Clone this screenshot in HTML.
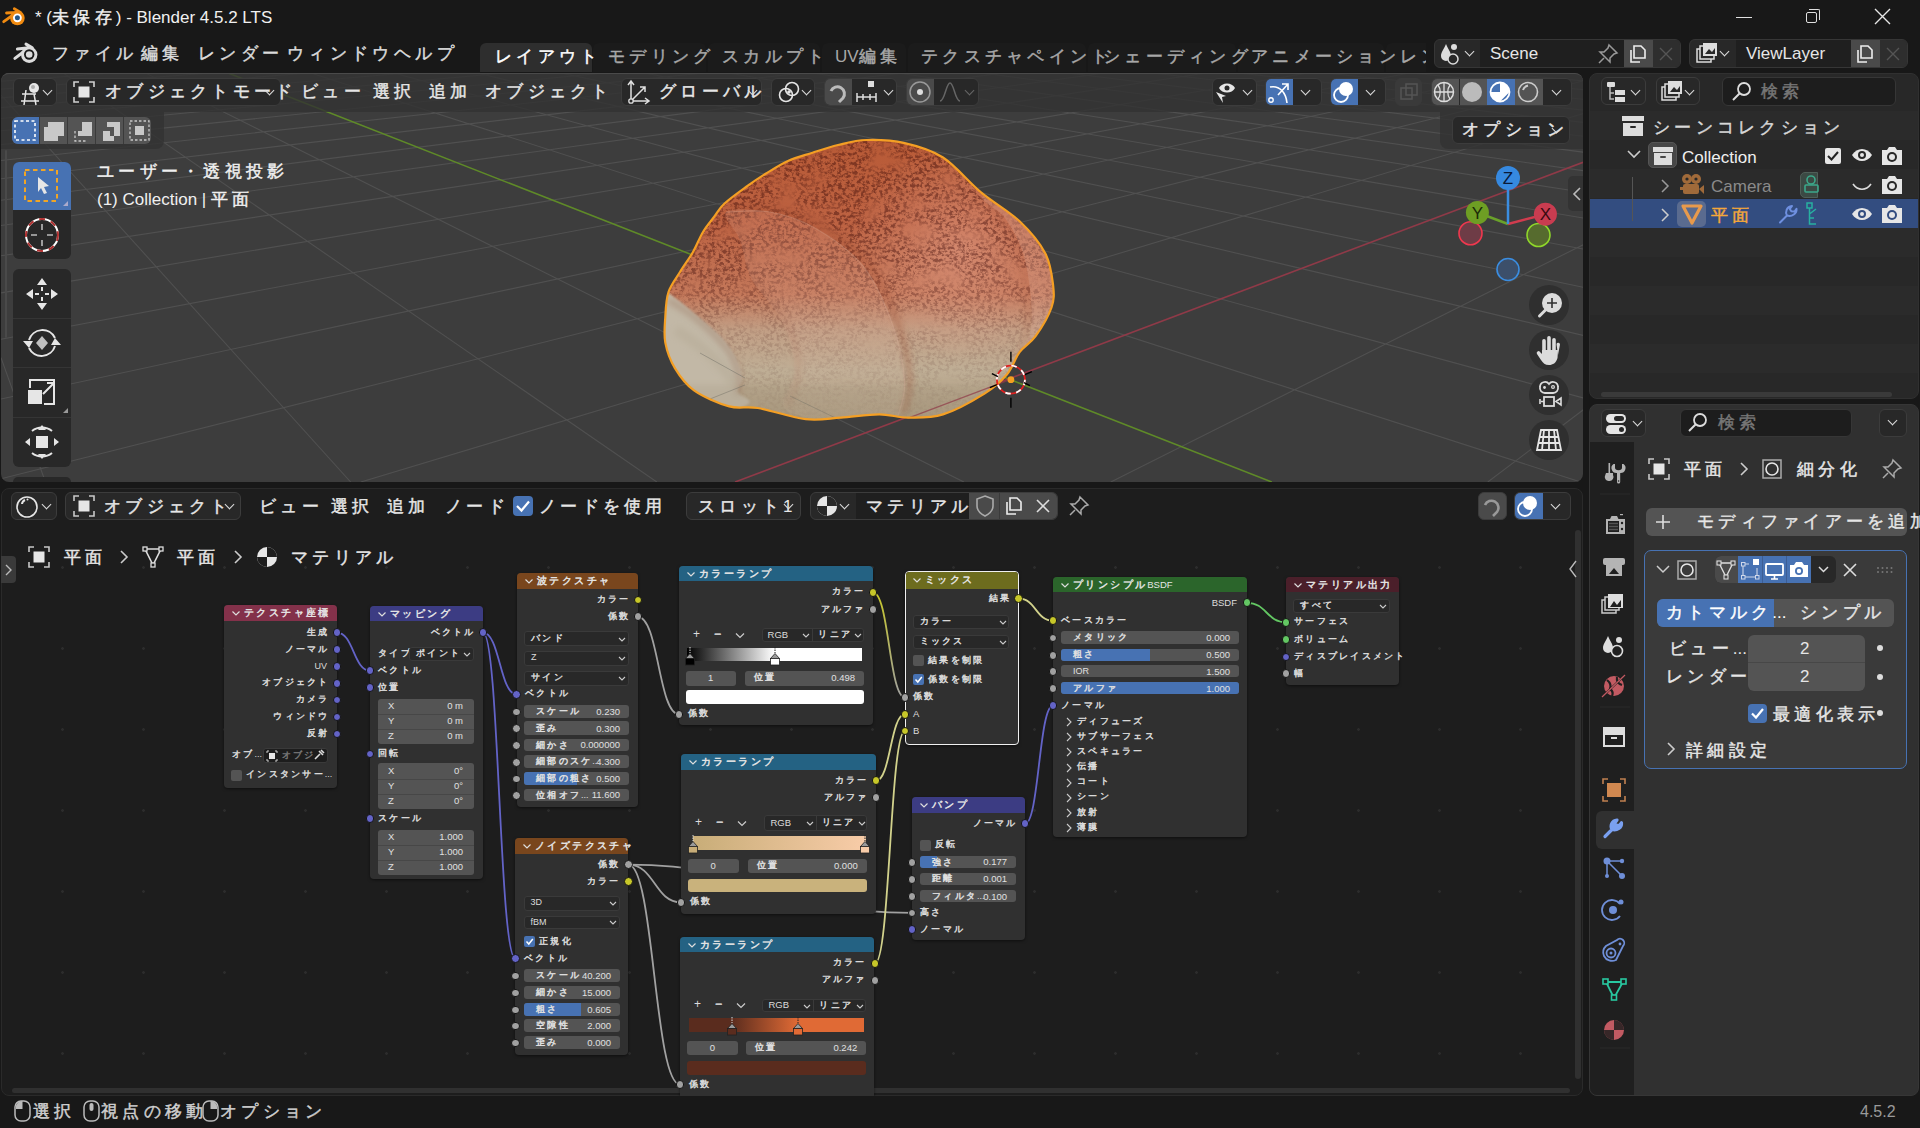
<!DOCTYPE html>
<html><head><meta charset="utf-8">
<style>
*{box-sizing:border-box;margin:0;padding:0}
html,body{width:1920px;height:1128px;overflow:hidden;background:#181818;font-family:"Liberation Sans",sans-serif;color:#e6e6e6}
.a{position:absolute}
.j{letter-spacing:.25em;-webkit-text-stroke:.45px currentColor}
.t{position:absolute;white-space:nowrap;line-height:1}
svg{position:absolute;left:0;top:0;overflow:visible}
</style></head><body>
<!-- TITLE BAR -->
<div class="a" style="left:0;top:0;width:1920px;height:35px;background:#181818"></div>
<svg width="30" height="30" style="left:0;top:0" viewBox="0 0 30 30">
 <path d="M3.7 21.7L13 15M6.5 13L16 12.4M14.3 8.7L20.5 12.4" stroke="#f08a10" stroke-width="2.8" stroke-linecap="round"/>
 <circle cx="17.4" cy="18" r="7.3" fill="#f08a10"/><circle cx="17.4" cy="17.8" r="4.4" fill="#fff"/><circle cx="17.4" cy="17.8" r="2.5" fill="#265787"/>
</svg>
<div class="t" style="left:35px;top:9px;font-size:17px;color:#f0f0f0">* (<span class="j">未保存</span>) - Blender 4.5.2 LTS</div>
<!-- window controls -->
<div class="a" style="left:1736px;top:17px;width:16px;height:1px;background:#e0e0e0"></div>
<div class="a" style="left:1806px;top:12px;width:11px;height:11px;border:1.3px solid #e0e0e0;border-radius:2px"></div>
<div class="a" style="left:1809px;top:9px;width:11px;height:11px;border-top:1.3px solid #e0e0e0;border-right:1.3px solid #e0e0e0;border-radius:0 2px 0 0"></div>
<svg width="20" height="20" style="left:1873px;top:7px"><path d="M2 2L17 17M17 2L2 17" stroke="#e6e6e6" stroke-width="1.4"/></svg>

<!-- TOP BAR -->
<svg width="40" height="30" style="left:0;top:35px" viewBox="0 35 40 30">
 <path d="M14.9 58.4L23 52.2M17.4 49.1L26.7 48.1M26 44.1L32.3 47.8" stroke="#dcdcdc" stroke-width="3" stroke-linecap="round"/>
 <circle cx="29.2" cy="54.7" r="8.2" fill="#dcdcdc"/><circle cx="29.2" cy="54.5" r="5.2" fill="#181818"/><circle cx="29.2" cy="54.5" r="3.3" fill="#dcdcdc"/>
</svg>
<div class="t j" style="left:52px;top:45px;font-size:17px;color:#dcdcdc">ファイル</div>
<div class="t j" style="left:141px;top:45px;font-size:17px;color:#dcdcdc">編集</div>
<div class="t j" style="left:198px;top:45px;font-size:17px;color:#dcdcdc">レンダー</div>
<div class="t j" style="left:287px;top:45px;font-size:17px;color:#dcdcdc">ウィンドウ</div>
<div class="t j" style="left:394px;top:45px;font-size:17px;color:#dcdcdc">ヘルプ</div>

<div class="a" style="left:480px;top:43px;width:112px;height:29px;background:#2e2e2e;border-radius:6px 6px 0 0"></div>
<div class="a" style="left:593px;top:43px;width:113px;height:29px;background:#1b1b1b;border-radius:6px 6px 0 0"></div>
<div class="a" style="left:708px;top:43px;width:112px;height:29px;background:#1b1b1b;border-radius:6px 6px 0 0"></div>
<div class="a" style="left:822px;top:43px;width:84px;height:29px;background:#1b1b1b;border-radius:6px 6px 0 0"></div>
<div class="a" style="left:908px;top:43px;width:178px;height:29px;background:#1b1b1b;border-radius:6px 6px 0 0"></div>
<div class="a" style="left:1088px;top:43px;width:148px;height:29px;background:#1b1b1b;border-radius:6px 6px 0 0"></div>
<div class="a" style="left:1238px;top:43px;width:146px;height:29px;background:#1b1b1b;border-radius:6px 6px 0 0"></div>
<div class="a" style="left:1386px;top:43px;width:40px;height:29px;background:#1b1b1b;border-radius:6px 0 0 0"></div>
<div class="t j" style="left:495px;top:48px;font-size:17px;color:#fff">レイアウト</div>
<div class="t j" style="left:608px;top:48px;font-size:17px;color:#a8a8a8">モデリング</div>
<div class="t j" style="left:722px;top:48px;font-size:17px;color:#a8a8a8">スカルプト</div>
<div class="t" style="left:835px;top:48px;font-size:17px;color:#a8a8a8">UV<span class="j">編集</span></div>
<div class="t j" style="left:921px;top:48px;font-size:17px;color:#a8a8a8">テクスチャペイント</div>
<div class="t j" style="left:1103px;top:48px;font-size:17px;color:#a8a8a8">シェーディング</div>
<div class="t j" style="left:1251px;top:48px;font-size:17px;color:#a8a8a8">アニメーション</div>
<div class="a" style="left:1400px;top:43px;width:26px;height:29px;overflow:hidden"><div class="t j" style="left:0;top:5px;font-size:17px;color:#a8a8a8">レンダリング</div></div>
<!-- scene selector -->
<div class="a" style="left:1434px;top:39px;width:247px;height:29px;background:#282828;border:1px solid #363636;border-radius:6px;overflow:hidden">
 <div class="a" style="left:45px;top:0;width:144px;height:29px;background:#1f1f1f"></div>
 <div class="a" style="left:189px;top:0;width:29px;height:29px;background:#4a4a4a"></div>
 <div class="a" style="left:218px;top:0;width:29px;height:29px;background:#2e2e2e"></div>
</div>
<svg width="30" height="26" style="left:1438px;top:41px" viewBox="0 0 30 26"><path d="M8 3C6 8 3 11 3 15A5 5 0 0 0 13 15C13 11 10 8 8 3Z" fill="#ddd"/><circle cx="16" cy="6" r="3" fill="#ddd"/><circle cx="15" cy="18" r="5" fill="#282828" stroke="#ddd" stroke-width="1.5"/></svg>
<div class="chev" style="left:1466px;top:48px"></div>
<div class="t" style="left:1490px;top:45px;font-size:17px;color:#e6e6e6">Scene</div>
<svg width="24" height="24" style="left:1596px;top:42px" viewBox="0 0 24 24"><path d="M13 3L21 11L18 12L14 16L14 20L4 10L8 10L12 6Z M8 16L3 21" stroke="#999" stroke-width="1.5" fill="none"/></svg>
<svg width="24" height="24" style="left:1626px;top:42px" viewBox="0 0 24 24"><path d="M8 4H15L19 8V16H8Z" fill="none" stroke="#eee" stroke-width="1.6"/><path d="M5 8V20H14" stroke="#eee" stroke-width="1.6" fill="none"/></svg>
<svg width="20" height="20" style="left:1656px;top:44px"><path d="M4 4L16 16M16 4L4 16" stroke="#555" stroke-width="1.4"/></svg>
<!-- view layer -->
<div class="a" style="left:1689px;top:39px;width:219px;height:29px;background:#282828;border:1px solid #363636;border-radius:6px;overflow:hidden">
 <div class="a" style="left:46px;top:0;width:115px;height:29px;background:#1f1f1f"></div>
 <div class="a" style="left:161px;top:0;width:29px;height:29px;background:#4a4a4a"></div>
 <div class="a" style="left:190px;top:0;width:29px;height:29px;background:#2e2e2e"></div>
</div>
<svg width="26" height="26" style="left:1694px;top:41px" viewBox="0 0 26 26"><rect x="3" y="8" width="14" height="13" fill="none" stroke="#ddd" stroke-width="1.5"/><rect x="6" y="5" width="14" height="13" fill="#282828" stroke="#ddd" stroke-width="1.5"/><rect x="9" y="2" width="14" height="13" fill="#ddd"/><path d="M11 13L15 8L18 11L21 7V13Z" fill="#282828"/></svg>
<div class="chev" style="left:1721px;top:48px"></div>
<div class="t" style="left:1746px;top:45px;font-size:17px;color:#e6e6e6">ViewLayer</div>
<svg width="24" height="24" style="left:1853px;top:42px" viewBox="0 0 24 24"><path d="M8 4H15L19 8V16H8Z" fill="none" stroke="#eee" stroke-width="1.6"/><path d="M5 8V20H14" stroke="#eee" stroke-width="1.6" fill="none"/></svg>
<svg width="20" height="20" style="left:1883px;top:44px"><path d="M4 4L16 16M16 4L4 16" stroke="#555" stroke-width="1.4"/></svg>
<!-- 3D VIEWPORT -->
<div class="a" id="vp" style="left:1px;top:73px;width:1582px;height:409px;background:#3d3d3d;border-radius:8px;overflow:hidden">
<svg width="1582" height="409" viewBox="0 0 1582 409" style="left:0;top:0">

 <path d="M44.4 409.0L0.0 284.6 M349.7 409.0L0.0 22.0 M655.8 409.0L62.2 0.0 M1486.8 409.0L1583.0 336.3 M962.9 409.0L144.5 0.0 M1109.8 409.0L1583.0 171.3 M1579.7 409.0L309.8 0.0 M359.9 409.0L1583.0 40.3 M1583.0 325.2L392.8 0.0 M0.0 405.7L1583.0 7.7 M1583.0 262.6L476.0 0.0 M0.0 326.0L1510.9 0.0 M1583.0 214.4L559.6 0.0 M0.0 266.3L1408.5 0.0 M1583.0 176.2L643.3 0.0 M0.0 219.9L1306.6 0.0 M1583.0 145.2L727.4 0.0 M0.0 182.8L1205.0 0.0 M1583.0 119.4L811.7 0.0 M0.0 152.5L1103.7 0.0 M1583.0 97.8L896.2 0.0 M0.0 127.2L1002.9 0.0 M1583.0 79.3L981.0 0.0 M0.0 105.8L902.4 0.0 M1583.0 63.4L1066.1 0.0 M0.0 87.5L802.3 0.0 M1583.0 49.5L1151.4 0.0 M0.0 71.6L702.5 0.0 M1583.0 37.2L1237.0 0.0 M0.0 57.7L603.1 0.0 M1583.0 26.4L1322.8 0.0 M0.0 45.5L504.0 0.0 M1583.0 16.7L1408.9 0.0 M0.0 34.6L405.3 0.0 M1583.0 8.0L1495.3 0.0 M0.0 24.9L306.9 0.0 M1583.0 0.1L1581.9 0.0 M0.0 16.1L208.9 0.0 M0.0 8.2L111.3 0.0 M0.0 1.0L14.0 0.0" stroke="#505050" stroke-width="1.1" fill="none"/>
 <path d="M1270.8 409 L227 0" stroke="#5f8a28" stroke-width="1.6"/>
 <path d="M734.1 409 L1582 89.3" stroke="#8f3a48" stroke-width="1.6"/>
 <g transform="translate(-1 -73)">
<defs>
<linearGradient id="bg0" x1="0" y1="139" x2="0" y2="421" gradientUnits="userSpaceOnUse"><stop offset="0" stop-color="#b85a36"/><stop offset=".3" stop-color="#bd6242"/><stop offset=".55" stop-color="#c4785a"/><stop offset=".68" stop-color="#c29f85"/><stop offset=".82" stop-color="#bfae95"/><stop offset="1" stop-color="#ac9b81"/></linearGradient>
<radialGradient id="bhi" cx="960" cy="250" r="110" gradientUnits="userSpaceOnUse"><stop offset="0" stop-color="#e3a08a" stop-opacity=".55"/><stop offset="1" stop-color="#e3a08a" stop-opacity="0"/></radialGradient>
<linearGradient id="bs1" x1="0" y1="200" x2="0" y2="420" gradientUnits="userSpaceOnUse"><stop offset="0" stop-color="#dc9c88" stop-opacity=".22"/><stop offset=".55" stop-color="#d8a892" stop-opacity=".2"/><stop offset="1" stop-color="#cdbba5" stop-opacity=".15"/></linearGradient>
<linearGradient id="bnm" x1="0" y1="139" x2="0" y2="421" gradientUnits="userSpaceOnUse"><stop offset="0" stop-color="#fff"/><stop offset=".45" stop-color="#eee"/><stop offset=".7" stop-color="#555"/><stop offset="1" stop-color="#111"/></linearGradient>
<mask id="bmask"><rect x="650" y="130" width="420" height="300" fill="url(#bnm)"/></mask>
<filter id="bspk" x="650" y="130" width="420" height="300" filterUnits="userSpaceOnUse"><feTurbulence type="fractalNoise" baseFrequency="0.26 0.32" numOctaves="4" seed="3" result="f"/><feColorMatrix in="f" type="matrix" values="0 0 0 0 0.34  0 0 0 0 0.21  0 0 0 0 0.21  4.2 0 0 0 -1.8" result="fa0"/><feGaussianBlur in="fa0" stdDeviation=".75" result="fa"/><feTurbulence type="fractalNoise" baseFrequency="0.03 0.045" numOctaves="2" seed="11" result="c"/><feColorMatrix in="c" type="matrix" values="0 0 0 0 0  0 0 0 0 0  0 0 0 0 0  0 0 3 0 -0.6" result="ca"/><feComposite in="fa" in2="ca" operator="in"/></filter>
<filter id="bblur" x="-20%" y="-20%" width="140%" height="140%"><feGaussianBlur stdDeviation="3"/></filter>
<filter id="bblur2" x="-20%" y="-20%" width="140%" height="140%"><feGaussianBlur stdDeviation="1"/></filter>
<clipPath id="bclip"><path d="M668.5 292.0C671.0 284.5 675.9 278.7 680.0 272.0C684.1 265.3 689.2 258.7 693.0 252.0C696.8 245.3 699.5 237.8 703.0 232.0C706.5 226.2 710.5 221.7 714.0 217.0C717.5 212.3 718.7 209.0 724.0 204.0C729.3 199.0 739.1 192.0 746.0 187.0C752.9 182.0 758.6 178.1 765.6 173.8C772.6 169.5 780.2 164.5 788.0 161.0C795.8 157.5 804.2 155.4 812.5 152.7C820.8 150.0 829.0 147.1 838.0 145.0C847.0 142.9 855.3 140.3 866.4 140.0C877.5 139.7 891.9 140.2 904.7 143.1C917.5 146.0 930.2 149.2 943.0 157.5C955.8 165.8 968.5 182.0 981.3 192.6C994.1 203.2 1009.0 211.2 1019.6 221.3C1030.2 231.4 1039.6 242.6 1045.2 253.2C1050.8 263.8 1052.0 276.1 1053.1 285.1C1054.1 294.2 1054.4 299.0 1051.5 307.5C1048.6 316.0 1040.9 328.8 1035.6 336.2C1030.3 343.6 1024.4 345.8 1019.6 352.2C1014.8 358.6 1012.8 367.6 1006.9 374.5C1001.0 381.4 995.1 387.0 984.5 393.6C973.9 400.2 955.8 410.4 943.0 414.4C930.2 418.4 918.5 417.6 907.9 417.6C897.3 417.6 890.4 414.4 879.2 414.4C868.0 414.4 853.1 416.8 840.9 417.6C828.7 418.4 819.6 420.8 805.8 419.2C792.0 417.6 770.7 410.1 757.9 408.0C745.1 405.9 739.9 409.3 729.2 406.4C718.6 403.5 703.0 396.8 694.0 390.4C685.0 384.0 679.7 376.1 674.9 368.1C670.1 360.1 666.9 351.1 665.3 342.6C663.7 334.1 664.8 325.4 665.3 317.0C665.8 308.6 666.0 299.5 668.5 292.0Z"/></clipPath>
</defs>
<g clip-path="url(#bclip)">
<path d="M668.5 292.0C671.0 284.5 675.9 278.7 680.0 272.0C684.1 265.3 689.2 258.7 693.0 252.0C696.8 245.3 699.5 237.8 703.0 232.0C706.5 226.2 710.5 221.7 714.0 217.0C717.5 212.3 718.7 209.0 724.0 204.0C729.3 199.0 739.1 192.0 746.0 187.0C752.9 182.0 758.6 178.1 765.6 173.8C772.6 169.5 780.2 164.5 788.0 161.0C795.8 157.5 804.2 155.4 812.5 152.7C820.8 150.0 829.0 147.1 838.0 145.0C847.0 142.9 855.3 140.3 866.4 140.0C877.5 139.7 891.9 140.2 904.7 143.1C917.5 146.0 930.2 149.2 943.0 157.5C955.8 165.8 968.5 182.0 981.3 192.6C994.1 203.2 1009.0 211.2 1019.6 221.3C1030.2 231.4 1039.6 242.6 1045.2 253.2C1050.8 263.8 1052.0 276.1 1053.1 285.1C1054.1 294.2 1054.4 299.0 1051.5 307.5C1048.6 316.0 1040.9 328.8 1035.6 336.2C1030.3 343.6 1024.4 345.8 1019.6 352.2C1014.8 358.6 1012.8 367.6 1006.9 374.5C1001.0 381.4 995.1 387.0 984.5 393.6C973.9 400.2 955.8 410.4 943.0 414.4C930.2 418.4 918.5 417.6 907.9 417.6C897.3 417.6 890.4 414.4 879.2 414.4C868.0 414.4 853.1 416.8 840.9 417.6C828.7 418.4 819.6 420.8 805.8 419.2C792.0 417.6 770.7 410.1 757.9 408.0C745.1 405.9 739.9 409.3 729.2 406.4C718.6 403.5 703.0 396.8 694.0 390.4C685.0 384.0 679.7 376.1 674.9 368.1C670.1 360.1 666.9 351.1 665.3 342.6C663.7 334.1 664.8 325.4 665.3 317.0C665.8 308.6 666.0 299.5 668.5 292.0Z" fill="url(#bg0)"/>
<rect x="650" y="130" width="420" height="300" fill="url(#bhi)"/>
<rect x="650" y="130" width="420" height="300" filter="url(#bspk)" mask="url(#bmask)" opacity=".85" style="mix-blend-mode:multiply"/>
<path d="M985.0 195.0C974.2 199.7 998.8 208.8 1005.0 218.0C1011.2 227.2 1017.8 238.0 1022.0 250.0C1026.2 262.0 1028.5 276.7 1030.0 290.0C1031.5 303.3 1032.7 318.3 1031.0 330.0C1029.3 341.7 1013.5 355.0 1020.0 360.0C1026.5 365.0 1061.7 388.3 1070.0 360.0C1078.3 331.7 1084.2 217.5 1070.0 190.0C1055.8 162.5 995.8 190.3 985.0 195.0Z" fill="#dcae9c" opacity=".28"/>
<path d="M985.0 195.0C988.3 198.8 998.8 208.8 1005.0 218.0C1011.2 227.2 1017.8 238.0 1022.0 250.0C1026.2 262.0 1028.5 276.7 1030.0 290.0C1031.5 303.3 1032.7 318.3 1031.0 330.0C1029.3 341.7 1021.8 355.0 1020.0 360.0" stroke="#a85a40" stroke-width="4" fill="none" opacity=".25" filter="url(#bblur)" transform="translate(-4 0)"/>
<path d="M726.0 212.0C733.3 212.0 755.2 209.3 770.0 212.0C784.8 214.7 799.5 219.0 815.0 228.0C830.5 237.0 850.2 250.2 863.0 266.0C875.8 281.8 885.0 303.8 892.0 323.0C899.0 342.2 903.7 365.5 904.7 381.0C905.7 396.5 899.1 410.2 898.0 416.0" stroke="#9a4a2e" stroke-width="6" fill="none" opacity=".35" filter="url(#bblur)" transform="translate(5 -2)"/>
<path d="M726.0 212.0C731.0 207.3 755.2 209.3 770.0 212.0C784.8 214.7 799.5 219.0 815.0 228.0C830.5 237.0 850.2 250.2 863.0 266.0C875.8 281.8 885.0 303.8 892.0 323.0C899.0 342.2 903.7 365.5 904.7 381.0C905.7 396.5 905.5 409.2 898.0 416.0C890.5 422.8 873.0 421.3 860.0 422.0C847.0 422.7 832.8 422.6 820.0 420.0C807.2 417.4 787.6 414.5 783.4 406.4C779.2 398.3 794.6 385.1 794.6 371.3C794.6 357.5 790.6 338.8 783.4 323.4C776.2 308.0 758.7 292.6 751.5 278.7C744.3 264.8 744.2 251.1 740.0 240.0C735.8 228.9 721.0 216.7 726.0 212.0Z" fill="url(#bs1)"/>
<path d="M726.0 212.0C733.3 212.0 755.2 209.3 770.0 212.0C784.8 214.7 799.5 219.0 815.0 228.0C830.5 237.0 850.2 250.2 863.0 266.0C875.8 281.8 885.0 303.8 892.0 323.0C899.0 342.2 903.7 365.5 904.7 381.0C905.7 396.5 899.1 410.2 898.0 416.0" stroke="#e0b6a2" stroke-width="1.2" fill="none" opacity=".25"/>
<path d="M726.0 212.0C728.3 216.7 735.8 228.9 740.0 240.0C744.2 251.1 744.3 264.8 751.5 278.7C758.7 292.6 776.2 308.0 783.4 323.4C790.6 338.8 794.6 357.5 794.6 371.3C794.6 385.1 785.3 400.5 783.4 406.4" stroke="#a06048" stroke-width="5" fill="none" opacity=".2" filter="url(#bblur)" transform="translate(4 0)"/>
<path d="M664.0 292.0C668.7 292.0 672.0 295.7 678.0 300.0C684.0 304.3 692.7 311.7 700.0 318.0C707.3 324.3 716.0 331.3 722.0 338.0C728.0 344.7 732.7 351.3 736.0 358.0C739.3 364.7 741.7 372.3 742.0 378.0C742.3 383.7 737.0 387.7 738.0 392.0C739.0 396.3 754.3 399.3 748.0 404.0C741.7 408.7 716.3 417.3 700.0 420.0C683.7 422.7 658.3 440.0 650.0 420.0C641.7 400.0 647.7 321.3 650.0 300.0C652.3 278.7 659.3 292.0 664.0 292.0Z" fill="#c2b8a6" filter="url(#bblur2)"/>
<path d="M668 300C690 312 712 330 728 350C738 365 742 380 738 394" stroke="#8c5a44" stroke-width="5" fill="none" opacity=".35" filter="url(#bblur)"/>
<path d="M676 330C700 345 722 362 735 385" stroke="#b0a48f" stroke-width="10" fill="none" opacity=".35" filter="url(#bblur)"/>
<path d="M700 353L745 378M690 407L745 385" stroke="#6a6a62" stroke-width=".9" opacity=".5"/>
<path d="M790 396L850 425" stroke="#6a6a62" stroke-width=".9" opacity=".45"/>
<rect x="650" y="385" width="420" height="45" fill="#8f8066" opacity=".15" filter="url(#bblur)"/>
</g>
<path d="M907.5 418.3 L 1010 379.7" stroke="#8f3a48" stroke-width="1.4" opacity=".7"/>
<path d="M668.5 292.0C671.0 284.5 675.9 278.7 680.0 272.0C684.1 265.3 689.2 258.7 693.0 252.0C696.8 245.3 699.5 237.8 703.0 232.0C706.5 226.2 710.5 221.7 714.0 217.0C717.5 212.3 718.7 209.0 724.0 204.0C729.3 199.0 739.1 192.0 746.0 187.0C752.9 182.0 758.6 178.1 765.6 173.8C772.6 169.5 780.2 164.5 788.0 161.0C795.8 157.5 804.2 155.4 812.5 152.7C820.8 150.0 829.0 147.1 838.0 145.0C847.0 142.9 855.3 140.3 866.4 140.0C877.5 139.7 891.9 140.2 904.7 143.1C917.5 146.0 930.2 149.2 943.0 157.5C955.8 165.8 968.5 182.0 981.3 192.6C994.1 203.2 1009.0 211.2 1019.6 221.3C1030.2 231.4 1039.6 242.6 1045.2 253.2C1050.8 263.8 1052.0 276.1 1053.1 285.1C1054.1 294.2 1054.4 299.0 1051.5 307.5C1048.6 316.0 1040.9 328.8 1035.6 336.2C1030.3 343.6 1024.4 345.8 1019.6 352.2C1014.8 358.6 1012.8 367.6 1006.9 374.5C1001.0 381.4 995.1 387.0 984.5 393.6C973.9 400.2 955.8 410.4 943.0 414.4C930.2 418.4 918.5 417.6 907.9 417.6C897.3 417.6 890.4 414.4 879.2 414.4C868.0 414.4 853.1 416.8 840.9 417.6C828.7 418.4 819.6 420.8 805.8 419.2C792.0 417.6 770.7 410.1 757.9 408.0C745.1 405.9 739.9 409.3 729.2 406.4C718.6 403.5 703.0 396.8 694.0 390.4C685.0 384.0 679.7 376.1 674.9 368.1C670.1 360.1 666.9 351.1 665.3 342.6C663.7 334.1 664.8 325.4 665.3 317.0C665.8 308.6 666.0 299.5 668.5 292.0Z" fill="none" stroke="#f49f24" stroke-width="2.2"/>
</g>
 <!-- 3D cursor -->
 <g transform="translate(1009.9 306.7)">
  <circle r="14" fill="none" stroke="#e02020" stroke-width="1.8"/>
  <circle r="14" fill="none" stroke="#fff" stroke-width="1.8" stroke-dasharray="5.5 5.5"/>
  <path d="M0 -28V-18M0 18V28M-19 -6L-13 -3M13 3L19 6M-21 8L-14 5M14 -5L21 -8" stroke="#000" stroke-width="1.4"/>
  <circle r="3.4" fill="#f5a020"/>
 </g>
</svg>
<!-- header overlay -->
<div class="a" style="left:0;top:0;width:1582px;height:39px;background:rgba(50,50,50,.8);border-top:1px solid #4a4a4a;border-radius:8px 8px 0 0"></div>
<!-- tool settings strip -->
<div class="a" style="left:0;top:39px;width:163px;height:37px;background:rgba(50,50,50,.8);border-radius:0 0 8px 0"></div>
<div class="a" style="left:1439px;top:39px;width:143px;height:37px;background:rgba(50,50,50,.8);border-radius:0 0 0 8px"></div>
</div>
<!-- header buttons (page coords) -->
<style>
.btn{position:absolute;height:28px;top:78px;background:#282828;border:1px solid #3c3c3c;border-radius:6px}
.chev{position:absolute;width:7px;height:7px;border-right:1.6px solid #ddd;border-bottom:1.6px solid #ddd;transform:rotate(45deg)}
.hdr{font-size:17px;color:#e6e6e6;top:83px}
</style>
<div class="btn" style="left:13px;width:44px"></div>
<svg width="30" height="26" style="left:19px;top:80px" viewBox="0 0 30 26"><path d="M3 14H17M2 21H20M7 10L5 25M15 14L17 25" stroke="#e6e6e6" stroke-width="1.5" fill="none"/><circle cx="15" cy="8" r="5" fill="#e6e6e6"/><circle cx="14" cy="7" r="2" fill="#282828" opacity=".3"/></svg>
<div class="chev" style="left:44px;top:87px"></div>
<div class="btn" style="left:66px;width:215px"></div>
<svg width="24" height="24" style="left:72px;top:80px" viewBox="0 0 24 24"><path d="M2 7V2H7M17 2H22V7M22 17V22H17M7 22H2V17" stroke="#d0d0d0" stroke-width="1.6" fill="none"/><rect x="6.5" y="6.5" width="11" height="11" fill="#e6e6e6"/></svg>
<div class="t j hdr" style="left:105px">オブジェクトモード</div>
<div class="chev" style="left:266px;top:87px"></div>
<div class="t j hdr" style="left:301px">ビュー</div>
<div class="t j hdr" style="left:373px">選択</div>
<div class="t j hdr" style="left:429px">追加</div>
<div class="t j hdr" style="left:485px">オブジェクト</div>

<div class="btn" style="left:621px;width:141px"></div>
<svg width="26" height="26" style="left:626px;top:79px" viewBox="0 0 26 26"><path d="M5 22V3M2 6L5 2L8 6M5 22H22M19 19L23 22L19 25M5 22L19 8M14 8H19V13" stroke="#e0e0e0" stroke-width="1.5" fill="none"/><circle cx="5" cy="22" r="2.2" fill="#282828" stroke="#e0e0e0" stroke-width="1.3"/></svg>
<div class="t j hdr" style="left:659px">グローバル</div>
<div class="chev" style="left:749px;top:87px"></div>
<div class="btn" style="left:771px;width:44px"></div>
<svg width="26" height="26" style="left:776px;top:79px" viewBox="0 0 26 26"><circle cx="16" cy="10" r="6.5" fill="none" stroke="#e6e6e6" stroke-width="1.6"/><circle cx="10" cy="16" r="6.5" fill="none" stroke="#e6e6e6" stroke-width="1.6"/><circle cx="13" cy="13" r="1.8" fill="#e6e6e6"/></svg>
<div class="chev" style="left:803px;top:87px"></div>
<div class="btn" style="left:824px;width:73px;overflow:hidden"><div class="a" style="left:0;top:0;width:27px;height:28px;background:#4a4a4a"></div></div>
<svg width="26" height="26" style="left:825px;top:79px" viewBox="0 0 26 26"><path d="M6 12 A7 7 0 1 1 18 19 L14 23" stroke="#bbb" stroke-width="3" fill="none"/></svg>
<svg width="26" height="26" style="left:854px;top:79px" viewBox="0 0 26 26"><rect x="14" y="2" width="6" height="6" fill="#ddd"/><path d="M3 14V23M3 18H22M9 15V21M16 15V21M22 14V23" stroke="#ddd" stroke-width="1.5"/></svg>
<div class="chev" style="left:885px;top:87px"></div>
<div class="btn" style="left:906px;width:73px;overflow:hidden"><div class="a" style="left:0;top:0;width:27px;height:28px;background:#4a4a4a"></div></div>
<svg width="26" height="26" style="left:907px;top:79px" viewBox="0 0 26 26"><circle cx="13" cy="13" r="10" fill="none" stroke="#999" stroke-width="1.5"/><circle cx="13" cy="13" r="3" fill="#ddd"/></svg>
<svg width="26" height="26" style="left:937px;top:79px" viewBox="0 0 26 26"><path d="M3 22C8 22 9 4 13 4C17 4 18 22 23 22" stroke="#666" stroke-width="1.5" fill="none"/></svg>
<div class="chev" style="left:966px;top:87px;border-color:#666"></div>

<div class="btn" style="left:1212px;width:45px"></div>
<svg width="28" height="26" style="left:1213px;top:79px" viewBox="0 0 28 26"><path d="M6 9C9 3 19 3 22 9C19 15 9 15 6 9Z" fill="#e6e6e6"/><circle cx="14" cy="9" r="2.5" fill="#282828"/><path d="M3 13L13 17L9 18L10 24Z" fill="#e6e6e6"/></svg>
<div class="chev" style="left:1244px;top:87px"></div>
<div class="btn" style="left:1265px;width:57px;overflow:hidden"><div class="a" style="left:0;top:0;width:27px;height:28px;background:#4772b3"></div></div>
<svg width="26" height="26" style="left:1266px;top:79px" viewBox="0 0 26 26"><path d="M4 8C14 6 20 14 21 24M12 16L22 5M16 5H22V11" stroke="#fff" stroke-width="1.6" fill="none"/><circle cx="5" cy="21" r="2.2" fill="none" stroke="#fff" stroke-width="1.4"/></svg>
<div class="chev" style="left:1302px;top:87px"></div>
<div class="btn" style="left:1330px;width:56px;overflow:hidden"><div class="a" style="left:0;top:0;width:27px;height:28px;background:#4772b3"></div></div>
<svg width="26" height="26" style="left:1331px;top:79px" viewBox="0 0 26 26"><circle cx="15" cy="10" r="7" fill="#fff"/><circle cx="10" cy="16" r="7" fill="none" stroke="#fff" stroke-width="1.8"/></svg>
<div class="chev" style="left:1367px;top:87px"></div>
<div class="btn" style="left:1395px;width:27px;background:#3a3a3a;border-color:#3a3a3a"></div>
<svg width="26" height="26" style="left:1396px;top:79px" viewBox="0 0 26 26"><rect x="5" y="9" width="11" height="11" fill="none" stroke="#555" stroke-width="1.5"/><rect x="10" y="5" width="11" height="11" fill="none" stroke="#555" stroke-width="1.5"/></svg>
<div class="btn" style="left:1431px;width:141px;overflow:hidden">
 <div class="a" style="left:0;top:0;width:27px;height:28px;background:#545454"></div>
 <div class="a" style="left:28px;top:0;width:27px;height:28px;background:#545454"></div>
 <div class="a" style="left:55px;top:0;width:28px;height:28px;background:#4772b3"></div>
 <div class="a" style="left:83px;top:0;width:28px;height:28px;background:#545454"></div>
</div>
<svg width="26" height="26" style="left:1431px;top:79px" viewBox="0 0 26 26"><circle cx="13" cy="13" r="9.5" fill="none" stroke="#ddd" stroke-width="1.5"/><path d="M3.5 13H22.5M13 3.5V22.5M7 6C10 10 10 16 7 20M19 6C16 10 16 16 19 20" stroke="#ddd" stroke-width="1.3" fill="none"/></svg>
<svg width="26" height="26" style="left:1459px;top:79px" viewBox="0 0 26 26"><circle cx="13" cy="13" r="10" fill="#bbb"/></svg>
<svg width="26" height="26" style="left:1487px;top:79px" viewBox="0 0 26 26"><circle cx="13" cy="13" r="9.5" fill="none" stroke="#fff" stroke-width="1.8"/><path d="M13 3.5A9.5 9.5 0 0 1 22.5 13L13 13Z M3.5 13A9.5 9.5 0 0 0 13 22.5L22.5 13" fill="#fff"/></svg>
<svg width="26" height="26" style="left:1515px;top:79px" viewBox="0 0 26 26"><circle cx="13" cy="13" r="9.5" fill="none" stroke="#ccc" stroke-width="1.6"/><path d="M8 11C9 8 11 7 13 6.5" stroke="#ccc" stroke-width="2" fill="none"/></svg>
<div class="chev" style="left:1553px;top:87px"></div>

<!-- select mode buttons -->
<div class="a" style="left:12px;top:117px;width:139px;height:27px;border-radius:6px;overflow:hidden;background:#545454">
 <div class="a" style="left:0;top:0;width:27px;height:27px;background:#4772b3"></div>
 <div class="a" style="left:27px;top:0;width:1px;height:27px;background:#3a3a3a"></div>
 <div class="a" style="left:55px;top:0;width:1px;height:27px;background:#3a3a3a"></div>
 <div class="a" style="left:83px;top:0;width:1px;height:27px;background:#3a3a3a"></div>
 <div class="a" style="left:111px;top:0;width:1px;height:27px;background:#3a3a3a"></div>
</div>
<svg width="140" height="27" style="left:12px;top:117px" viewBox="0 0 140 27">
 <rect x="3" y="4" width="20" height="19" fill="none" stroke="#fff" stroke-width="1.6" stroke-dasharray="3 2.5"/>
 <path d="M32 10H36V5H52V19H46V24H32Z" fill="#c8c8c8"/>
 <path d="M70 5H80V19H66V14H70Z" fill="#c8c8c8"/><path d="M63 14V24H74" stroke="#c8c8c8" stroke-width="1.3" stroke-dasharray="2.5 2" fill="none"/>
 <path d="M95 5H108V19H102V10H95Z M91 14H98V19H102V24H91Z" fill="#c8c8c8"/>
 <rect x="118" y="4" width="19" height="19" fill="none" stroke="#c8c8c8" stroke-width="1.3" stroke-dasharray="2.5 2"/><rect x="123" y="9" width="9" height="9" fill="#c8c8c8"/>
</svg>

<!-- toolbar -->
<div class="a" style="left:5px;top:150px;width:2px;height:188px;background:#4a4a4a;border-radius:1px"></div>
<div class="a" style="left:13px;top:162px;width:58px;height:97px;background:#282828;border-radius:6px;overflow:hidden"><div class="a" style="left:0;top:0;width:58px;height:48px;background:#4772b3"></div></div>
<svg width="58" height="48" style="left:13px;top:162px" viewBox="0 0 58 48"><rect x="12" y="8" width="32" height="31" fill="none" stroke="#f0a526" stroke-width="2" stroke-dasharray="4.5 3.5"/><path d="M25 15L36 24L31 25L34 31L31 32L28 26L25 30Z" fill="#e6e6e6"/><path d="M50 44L55 39V44Z" fill="#aac"/></svg>
<svg width="58" height="49" style="left:13px;top:210px" viewBox="0 0 58 49"><circle cx="29" cy="25" r="16" fill="none" stroke="#fff" stroke-width="2"/><circle cx="29" cy="25" r="16" fill="none" stroke="#b03030" stroke-width="2" stroke-dasharray="6 6"/><path d="M29 14V20M29 30V36M18 25H24M34 25H40" stroke="#bbb" stroke-width="1.6"/></svg>
<div class="a" style="left:13px;top:269px;width:58px;height:198px;background:#282828;border-radius:6px"></div>
<div class="a" style="left:13px;top:318px;width:58px;height:1px;background:#353535"></div>
<div class="a" style="left:13px;top:367px;width:58px;height:1px;background:#353535"></div>
<div class="a" style="left:13px;top:417px;width:58px;height:1px;background:#353535"></div>
<svg width="58" height="49" style="left:13px;top:269px" viewBox="0 0 58 49"><path d="M29 9L24 16H34Z M29 41L24 34H34Z M13 25L20 20V30Z M45 25L38 20V30Z" fill="#e6e6e6"/><path d="M29 18V22M29 28V32M22 25H26M32 25H36" stroke="#e6e6e6" stroke-width="2"/></svg>
<svg width="58" height="49" style="left:13px;top:318px" viewBox="0 0 58 49"><path d="M29 18L35 25L29 32L23 25Z" fill="#c0c0c0"/><path d="M16 22A14 14 0 0 1 42 20M42 28A14 14 0 0 1 16 30" stroke="#e6e6e6" stroke-width="2" fill="none"/><path d="M16 30L10 23H20Z M42 20L48 27H38Z" fill="#e6e6e6"/></svg>
<svg width="58" height="49" style="left:13px;top:368px" viewBox="0 0 58 49"><rect x="15" y="22" width="14" height="14" fill="#e6e6e6"/><path d="M17 20V12H41V36H31M30 26L40 16M34 15H41V22" stroke="#e6e6e6" stroke-width="2" fill="none"/><path d="M50 45L55 40V45Z" fill="#999"/></svg>
<svg width="58" height="49" style="left:13px;top:417px" viewBox="0 0 58 49"><rect x="23" y="19" width="12" height="12" fill="#e6e6e6"/><path d="M29 8L25 13H33Z M29 42L25 37H33Z M12 25L17 21V29Z M46 25L41 21V29Z" fill="#e6e6e6"/><path d="M19 14A16 16 0 0 1 39 14M39 36A16 16 0 0 1 19 36" stroke="#e6e6e6" stroke-width="2" fill="none"/></svg>
<div class="a" style="left:13px;top:477px;width:58px;height:5px;background:#282828;border-radius:6px 6px 0 0"></div>

<!-- overlay text -->
<div class="t j" style="left:97px;top:163px;font-size:17px;color:#f0f0f0">ユーザー・透視投影</div>
<div class="t" style="left:97px;top:191px;font-size:17px;color:#f0f0f0">(1) Collection | <span class="j">平面</span></div>

<!-- options dropdown -->
<div class="btn" style="left:1452px;top:116px;width:118px"></div>
<div class="t j" style="left:1462px;top:121px;font-size:17px;color:#e6e6e6">オプション</div>
<div class="chev" style="left:1553px;top:125px"></div>
<!-- sidebar collapse -->
<div class="a" style="left:1568px;top:176px;width:15px;height:35px;background:#333;border-radius:5px 0 0 5px"></div>
<svg width="12" height="16" style="left:1571px;top:186px"><path d="M9 2L3 8L9 14" stroke="#bbb" stroke-width="1.6" fill="none"/></svg>

<!-- navigation gizmo -->
<svg width="120" height="120" style="left:1448px;top:164px" viewBox="-60 -60 120 120">
 <path d="M0 0L-30.6 -11.5" stroke="#6aa12a" stroke-width="2.5"/>
 <path d="M0 0L37.4 -9.8" stroke="#d03c4e" stroke-width="2.5"/>
 <path d="M0 0V-46" stroke="#3b8de0" stroke-width="2.5"/>
 <circle cx="30.5" cy="11" r="11.5" fill="#566b2e" stroke="#8fd72a" stroke-width="1.6"/>
 <circle cx="-37.5" cy="9.3" r="11.5" fill="#6e3c46" stroke="#f0384e" stroke-width="1.6"/>
 <circle cx="0" cy="45.5" r="11" fill="#3c4f6a" stroke="#3b8de0" stroke-width="1.6"/>
 <circle cx="-30.6" cy="-11.5" r="11.5" fill="#6e9e24"/>
 <circle cx="37.4" cy="-9.8" r="11.5" fill="#c93c50"/>
 <circle cx="0" cy="-46" r="12" fill="#3689e0"/>
 <text x="-30.6" y="-5.5" font-size="17" text-anchor="middle" fill="#1a2a08" font-family="Liberation Sans">Y</text>
 <text x="37.4" y="-3.8" font-size="17" text-anchor="middle" fill="#3a0a10" font-family="Liberation Sans">X</text>
 <text x="0" y="-40" font-size="17" text-anchor="middle" fill="#0a1a38" font-family="Liberation Sans">Z</text>
</svg>
<!-- nav buttons -->
<div class="a" style="left:1529px;top:285px;width:40px;height:40px;border-radius:50%;background:#2f2f2f"></div>
<div class="a" style="left:1529px;top:330px;width:40px;height:40px;border-radius:50%;background:#2f2f2f"></div>
<div class="a" style="left:1529px;top:375px;width:40px;height:40px;border-radius:50%;background:#2f2f2f"></div>
<div class="a" style="left:1529px;top:420px;width:40px;height:40px;border-radius:50%;background:#2f2f2f"></div>
<svg width="40" height="40" style="left:1529px;top:285px" viewBox="0 0 40 40"><circle cx="23" cy="18" r="10" fill="#dcdcdc"/><path d="M23 13V23M18 18H28" stroke="#2f2f2f" stroke-width="1.6"/><path d="M16.5 25L10.5 31" stroke="#dcdcdc" stroke-width="3" stroke-linecap="round"/></svg>
<svg width="40" height="40" style="left:1529px;top:330px" viewBox="0 0 40 40"><g fill="#dcdcdc"><rect x="13.2" y="9" width="3.6" height="16" rx="1.8"/><rect x="18.2" y="6" width="3.6" height="18" rx="1.8"/><rect x="23.2" y="8" width="3.6" height="17" rx="1.8"/><path d="M27.5 14A1.8 1.8 0 0 1 31 14.5L29 25Z"/><path d="M13 20H29L28.5 28C27 33 24 35 20 35C16 35 14 33 12 30L8 24A1.8 1.8 0 0 1 11 22L13 24Z"/></g></svg>
<svg width="40" height="40" style="left:1529px;top:375px" viewBox="0 0 40 40"><path d="M11 12A5 5 0 0 1 20 9A5 5 0 0 1 29 12A5 5 0 0 1 24 18H16A5 5 0 0 1 11 12Z" fill="none" stroke="#dcdcdc" stroke-width="1.8"/><circle cx="15.5" cy="12.5" r="1.4" fill="#dcdcdc"/><circle cx="24" cy="12" r="1.4" fill="none" stroke="#dcdcdc" stroke-width="1.2"/><rect x="15" y="22" width="10" height="9" fill="none" stroke="#dcdcdc" stroke-width="1.8"/><path d="M11 24V29M12 26.5H15M27 26.5L32 23V30Z" stroke="#dcdcdc" stroke-width="1.6" fill="none"/></svg>
<svg width="40" height="40" style="left:1529px;top:420px" viewBox="0 0 40 40"><path d="M12 10H28L32 30H8Z M15 10L13 30M20 10V30M25 10L27 30M10 17H30M9 23H31" stroke="#e6e6e6" stroke-width="1.8" fill="none"/></svg>
<!-- OUTLINER -->
<div class="a" style="left:1589px;top:73px;width:330px;height:326px;background:#282828;border-radius:8px;overflow:hidden;border:1px solid #303030">
 <div class="a" style="left:0;top:37px;width:330px;height:29px;background:#2b2b2b"></div>
 <div class="a" style="left:0;top:95px;width:330px;height:29px;background:#2b2b2b"></div>
 <div class="a" style="left:0;top:125px;width:330px;height:29px;background:#334d80"></div>
 <div class="a" style="left:0;top:154px;width:330px;height:29px;background:#2b2b2b"></div>
 <div class="a" style="left:0;top:212px;width:330px;height:29px;background:#2b2b2b"></div>
 <div class="a" style="left:0;top:270px;width:330px;height:29px;background:#2b2b2b"></div>
 <div class="a" style="left:11px;top:318px;width:291px;height:5px;background:#3a3a3a;border-radius:3px"></div>
</div>
<div class="btn" style="left:1601px;top:77px;width:45px"></div>
<svg width="26" height="26" style="left:1604px;top:79px" viewBox="0 0 26 26"><rect x="3" y="3" width="8" height="5" rx="1" fill="#ddd"/><path d="M6 8V20H10M6 14H10" stroke="#bbb" stroke-width="1.5" fill="none"/><rect x="11" y="11" width="10" height="5" fill="#ddd"/><rect x="11" y="18" width="10" height="5" fill="#ddd"/></svg>
<div class="chev" style="left:1632px;top:87px"></div>
<div class="btn" style="left:1656px;top:77px;width:44px"></div>
<svg width="26" height="26" style="left:1659px;top:79px" viewBox="0 0 26 26"><rect x="3" y="8" width="14" height="13" fill="none" stroke="#ddd" stroke-width="1.5"/><rect x="6" y="5" width="14" height="13" fill="#282828" stroke="#ddd" stroke-width="1.5"/><rect x="9" y="2" width="14" height="13" fill="#ddd"/><path d="M11 13L15 8L18 11L21 7V13Z" fill="#282828"/></svg>
<div class="chev" style="left:1686px;top:87px"></div>
<div class="a" style="left:1722px;top:77px;width:174px;height:29px;background:#1d1d1d;border:1px solid #363636;border-radius:6px"></div>
<svg width="24" height="24" style="left:1730px;top:80px" viewBox="0 0 24 24"><circle cx="14" cy="9" r="6" fill="none" stroke="#ddd" stroke-width="1.8"/><path d="M10 13L3 20" stroke="#ddd" stroke-width="2"/></svg>
<div class="t j" style="left:1761px;top:83px;font-size:17px;color:#777">検索</div>

<!-- rows -->
<svg width="24" height="24" style="left:1621px;top:114px" viewBox="0 0 24 24"><rect x="1" y="2" width="22" height="5" fill="#ddd"/><rect x="2" y="9" width="20" height="13" fill="#ddd"/><rect x="9" y="12" width="6" height="2" rx="1" fill="#282828"/></svg>
<div class="t j" style="left:1653px;top:119px;font-size:17px;color:#d8d8d8">シーンコレクション</div>
<svg width="16" height="12" style="left:1626px;top:149px"><path d="M2 2L8 8L14 2" stroke="#ccc" stroke-width="1.6" fill="none"/></svg>
<div class="a" style="left:1648px;top:142px;width:29px;height:26px;background:#474747;border-radius:5px;border:1px solid #555"></div>
<svg width="24" height="24" style="left:1651px;top:144px" viewBox="0 0 24 24"><rect x="2" y="3" width="20" height="5" fill="#ddd"/><rect x="3" y="9" width="18" height="12" fill="#ddd"/><rect x="9" y="12" width="6" height="2" rx="1" fill="#474747"/></svg>
<div class="t" style="left:1682px;top:149px;font-size:17px;color:#f0f0f0">Collection</div>
<div class="a" style="left:1825px;top:148px;width:16px;height:16px;background:#e6e6e6;border-radius:2px"></div>
<svg width="16" height="16" style="left:1825px;top:148px"><path d="M3 8L6.5 11.5L13 4" stroke="#222" stroke-width="2" fill="none"/></svg>
<svg width="24" height="18" style="left:1850px;top:146px" viewBox="0 0 24 18"><path d="M2 9C7 1 17 1 22 9C17 17 7 17 2 9Z" fill="#e6e6e6"/><circle cx="12" cy="9" r="4" fill="#282828"/><circle cx="12" cy="9" r="2" fill="#e6e6e6"/></svg>
<svg width="24" height="22" style="left:1880px;top:145px" viewBox="0 0 24 22"><path d="M2 5H7L9 2H15L17 5H22V20H2Z" fill="#e6e6e6"/><circle cx="12" cy="12" r="5" fill="#282828"/><circle cx="12" cy="12" r="3" fill="#e6e6e6"/></svg>

<div class="a" style="left:1632px;top:177px;width:1px;height:44px;background:#555"></div>
<svg width="12" height="16" style="left:1659px;top:178px"><path d="M3 2L9 8L3 14" stroke="#999" stroke-width="1.5" fill="none"/></svg>
<svg width="26" height="26" style="left:1679px;top:172px" viewBox="0 0 26 26"><circle cx="8" cy="7" r="5" fill="#a06a3a"/><circle cx="17" cy="7" r="5" fill="#a06a3a"/><circle cx="8" cy="7" r="1.6" fill="#282828"/><circle cx="17" cy="7" r="1.6" fill="#282828"/><rect x="4" y="12" width="16" height="10" rx="2" fill="#a06a3a"/><path d="M20 17L25 13V22Z" fill="#a06a3a"/><rect x="1" y="15" width="4" height="3" fill="#a06a3a"/></svg>
<div class="t" style="left:1711px;top:178px;font-size:17px;color:#8a8a8a">Camera</div>
<div class="a" style="left:1800px;top:172px;width:18px;height:26px;background:#3b4a44;border-radius:5px 0 0 5px;border:1px solid #4f5f58"></div>
<svg width="18" height="26" style="left:1801px;top:172px" viewBox="0 0 18 26"><circle cx="10" cy="8" r="4" fill="none" stroke="#3ca88a" stroke-width="1.6"/><rect x="4" y="13" width="13" height="7" rx="1" fill="none" stroke="#3ca88a" stroke-width="1.6"/></svg>
<svg width="24" height="12" style="left:1850px;top:181px"><path d="M3 3C8 10 16 10 21 3" stroke="#ddd" stroke-width="1.6" fill="none"/></svg>
<svg width="24" height="22" style="left:1880px;top:174px" viewBox="0 0 24 22"><path d="M2 5H7L9 2H15L17 5H22V20H2Z" fill="#e6e6e6"/><circle cx="12" cy="12" r="5" fill="#282828"/><circle cx="12" cy="12" r="3" fill="#e6e6e6"/></svg>

<svg width="12" height="16" style="left:1659px;top:207px"><path d="M3 2L9 8L3 14" stroke="#ccc" stroke-width="1.5" fill="none"/></svg>
<div class="a" style="left:1677px;top:201px;width:29px;height:26px;background:#5a6b8f;border-radius:5px"></div>
<svg width="24" height="22" style="left:1680px;top:203px" viewBox="0 0 24 22"><path d="M3 3H21L12 20Z" fill="none" stroke="#e89a4c" stroke-width="3.2" stroke-linejoin="round"/></svg>
<div class="t j" style="left:1711px;top:207px;font-size:17px;color:#f5a83a">平面</div>
<svg width="24" height="24" style="left:1776px;top:202px" viewBox="0 0 24 24"><path d="M4 20.5L11 13.5M11 13.5C9 10 10.5 4.5 16 4L13.8 7L15.3 9.2L18.5 9.5L20.5 6.8C21 11.5 16 15 11 13.5" stroke="#6f90e0" stroke-width="2" fill="none" stroke-linecap="round" stroke-linejoin="round"/></svg>
<svg width="14" height="24" style="left:1805px;top:202px" viewBox="0 0 14 24"><rect x="2" y="1" width="5" height="5" fill="none" stroke="#28b0a0" stroke-width="1.5"/><path d="M4.5 6V22H11M4.5 12L11 7M4.5 16H9" stroke="#28b0a0" stroke-width="1.5" fill="none"/></svg>
<svg width="24" height="18" style="left:1850px;top:205px" viewBox="0 0 24 18"><path d="M2 9C7 1 17 1 22 9C17 17 7 17 2 9Z" fill="#e6e6e6"/><circle cx="12" cy="9" r="4" fill="#334d80"/><circle cx="12" cy="9" r="2" fill="#e6e6e6"/></svg>
<svg width="24" height="22" style="left:1880px;top:203px" viewBox="0 0 24 22"><path d="M2 5H7L9 2H15L17 5H22V20H2Z" fill="#e6e6e6"/><circle cx="12" cy="12" r="5" fill="#334d80"/><circle cx="12" cy="12" r="3" fill="#e6e6e6"/></svg>
<!-- PROPERTIES -->
<div class="a" style="left:1589px;top:404px;width:330px;height:692px;background:#303030;border-radius:8px;overflow:hidden;border:1px solid #363636">
 <div class="a" style="left:0;top:37px;width:44px;height:655px;background:#1f1f1f"></div>
 <div class="a" style="left:6px;top:406px;width:38px;height:38px;background:#303030;border-radius:6px 0 0 6px"></div>
</div>
<div class="btn" style="left:1601px;top:409px;width:45px"></div>
<svg width="26" height="26" style="left:1604px;top:411px" viewBox="0 0 26 26"><rect x="2" y="3" width="20" height="9" rx="4.5" fill="#e6e6e6"/><rect x="10" y="5" width="10" height="5" rx="2.5" fill="#282828"/><rect x="2" y="14" width="20" height="9" rx="4.5" fill="#e6e6e6"/><rect x="15" y="16" width="5" height="5" rx="2.5" fill="#282828"/></svg>
<div class="chev" style="left:1634px;top:418px"></div>
<div class="a" style="left:1680px;top:409px;width:172px;height:28px;background:#1d1d1d;border:1px solid #363636;border-radius:6px"></div>
<svg width="24" height="24" style="left:1686px;top:411px" viewBox="0 0 24 24"><circle cx="14" cy="9" r="6" fill="none" stroke="#ddd" stroke-width="1.8"/><path d="M10 13L3 20" stroke="#ddd" stroke-width="2"/></svg>
<div class="t j" style="left:1718px;top:414px;font-size:17px;color:#777">検索</div>
<div class="btn" style="left:1879px;top:409px;width:28px"></div>
<div class="chev" style="left:1889px;top:417px"></div>

<!-- tab icons -->
<svg width="44" height="640" style="left:1592px;top:445px" viewBox="0 0 44 640">
 <!-- tool -->
 <g fill="#b4b4b4" stroke="none"><rect x="16.5" y="18" width="1.6" height="10"/><path d="M14 28H21V30A4 4 0 0 1 17.3 36A4 4 0 0 1 13.3 30Z"/><path d="M21.5 19A5 5 0 0 0 25 28V37A1.6 1.6 0 0 0 28.2 37V28A5 5 0 0 0 31.5 19L30 19V22.5A2.5 2 0 0 1 23 22.5V19Z"/><circle cx="26.6" cy="36" r=".8" fill="#1f1f1f"/></g>
 <path d="M8 49H38" stroke="#2a2a2a"/>
 <!-- render -->
 <g transform="translate(0 79)"><path d="M14 -5H18L19.5 -8H25L26.5 -5H33V10H14Z" fill="#b4b4b4"/><rect x="16" y="-3" width="11" height="11" fill="#1f1f1f"/><path d="M17 -0.5H26M17 2.5H26M17 5.5H26" stroke="#555" stroke-width="1.6"/><circle cx="30" cy="-1" r="1.2" fill="#1f1f1f"/><circle cx="30" cy="5" r="1.2" fill="#1f1f1f"/><rect x="28" y="-10" width="3" height="1.2" fill="#b4b4b4"/></g>
 <!-- output -->
 <g transform="translate(0 121)"><rect x="11" y="-8" width="22" height="7" rx="2" fill="#b4b4b4"/><rect x="14" y="-2" width="16" height="12" fill="#b4b4b4"/><path d="M17 8L22 2L27 8Z" fill="#1f1f1f"/></g>
 <!-- view layer -->
 <g transform="translate(0 160)"><rect x="10" y="-5" width="14" height="13" fill="none" stroke="#ccc" stroke-width="1.5"/><rect x="13" y="-8" width="14" height="13" fill="#1f1f1f" stroke="#ccc" stroke-width="1.5"/><rect x="16" y="-11" width="15" height="14" fill="#ddd"/><path d="M18 2L22 -4L25 0L29 -5V2Z" fill="#1f1f1f"/></g>
 <!-- scene -->
 <g transform="translate(0 201)"><path d="M16 -10C14 -5 11 -2 11 2A5 5 0 0 0 21 2C21 -2 18 -5 16 -10Z" fill="#ddd"/><circle cx="27" cy="-6" r="3" fill="#ddd"/><circle cx="25" cy="5" r="5.5" fill="#1f1f1f" stroke="#ddd" stroke-width="1.6"/></g>
 <!-- world -->
 <g transform="translate(0 241)"><circle cx="22" cy="0" r="10" fill="#c25a62"/><path d="M15 -6Q20 -2 18 3Q22 6 20 10M25 -9Q24 -3 30 -1" stroke="#1f1f1f" stroke-width="2.2" fill="none"/><path d="M9 12L34 -12" stroke="#1f1f1f" stroke-width="2"/><path d="M10 11L33 -11" stroke="#c25a62" stroke-width="1.2"/></g>
 <path d="M8 262H38" stroke="#2a2a2a"/>
 <!-- collection -->
 <g transform="translate(0 291)"><rect x="11" y="-9" width="22" height="6" fill="#ddd"/><rect x="12" y="-2" width="20" height="12" fill="none" stroke="#ddd" stroke-width="2"/><rect x="19" y="1" width="6" height="2" fill="#ddd"/></g>
 <!-- object -->
 <g transform="translate(0 345)"><path d="M11 -6V-11H16M28 -11H33V-6M33 6V11H28M16 11H11V6" stroke="#c08050" stroke-width="1.6" fill="none"/><rect x="15" y="-7" width="14" height="14" fill="#d08850"/></g>
 <!-- modifier (active) -->
 <g transform="translate(9 371)"><path d="M4 20.5L11 13.5M11 13.5C9 10 10.5 4.5 16 4L13.8 7L15.3 9.2L18.5 9.5L20.5 6.8C21 11.5 16 15 11 13.5Z" stroke="#7aa0f0" stroke-width="3.2" fill="#7aa0f0" stroke-linecap="round" stroke-linejoin="round"/></g>
 <!-- particles -->
 <g transform="translate(0 424)"><circle cx="15" cy="-8" r="3.5" fill="#6f8fd8"/><circle cx="30" cy="-8" r="2.2" fill="#6f8fd8"/><circle cx="15" cy="7" r="2" fill="#6f8fd8"/><circle cx="30" cy="7" r="3" fill="#6f8fd8"/><path d="M18 -8H29M15 -5V6M17 -6L29 6" stroke="#6f8fd8" stroke-width="1.5"/></g>
 <!-- physics -->
 <g transform="translate(0 465)"><path d="M28 -6A10 10 0 1 0 28 6" stroke="#6f8fd8" stroke-width="1.8" fill="none"/><circle cx="21" cy="0" r="4" fill="#6f8fd8"/><circle cx="29" cy="-8" r="2.5" fill="#6f8fd8"/></g>
 <!-- constraints -->
 <g transform="translate(0 505)"><path d="M12 6A9 9 0 0 0 24 10L31 -4A4 4 0 0 0 25 -10L14 -4A9 9 0 0 0 12 6Z" fill="none" stroke="#6f8fd8" stroke-width="1.8"/><circle cx="19" cy="3" r="4.5" fill="none" stroke="#6f8fd8" stroke-width="1.8"/><circle cx="19" cy="3" r="1.5" fill="#6f8fd8"/><circle cx="28" cy="-6" r="1.4" fill="#6f8fd8"/></g>
 <!-- data -->
 <g transform="translate(0 545)"><path d="M14 -8H31L22 8Z" fill="none" stroke="#28c8a0" stroke-width="1.8"/><rect x="11" y="-11" width="5" height="5" fill="#1f1f1f" stroke="#28c8a0" stroke-width="1.6"/><rect x="29" y="-11" width="5" height="5" fill="#1f1f1f" stroke="#28c8a0" stroke-width="1.6"/><rect x="19.5" y="5" width="5" height="5" fill="#1f1f1f" stroke="#28c8a0" stroke-width="1.6"/></g>
 <!-- material -->
 <g transform="translate(0 585)"><circle cx="22" cy="0" r="10" fill="#c25a62"/><path d="M22 -10V0H12A10 10 0 0 0 22 10V0H32A10 10 0 0 0 22 -10Z" fill="#1f1f1f" opacity=".85"/></g>
 <path d="M8 603H38" stroke="#2a2a2a"/>
</svg>

<!-- breadcrumb -->
<svg width="24" height="24" style="left:1647px;top:457px" viewBox="0 0 24 24"><path d="M2 7V2H7M17 2H22V7M22 17V22H17M7 22H2V17" stroke="#c8c8c8" stroke-width="1.6" fill="none"/><rect x="6.5" y="6.5" width="11" height="11" fill="#e6e6e6"/></svg>
<div class="t j" style="left:1684px;top:461px;font-size:17px;color:#e6e6e6">平面</div>
<svg width="12" height="16" style="left:1738px;top:461px"><path d="M3 2L9 8L3 14" stroke="#ccc" stroke-width="1.6" fill="none"/></svg>
<svg width="22" height="22" style="left:1761px;top:458px" viewBox="0 0 22 22"><rect x="2" y="2" width="18" height="18" fill="none" stroke="#aaa" stroke-width="1.5"/><circle cx="11" cy="11" r="6" fill="none" stroke="#e6e6e6" stroke-width="1.6"/></svg>
<div class="t j" style="left:1797px;top:461px;font-size:17px;color:#e6e6e6">細分化</div>
<svg width="24" height="24" style="left:1880px;top:457px" viewBox="0 0 24 24"><path d="M13 3L21 11L18 12L14 16L14 20L4 10L8 10L12 6Z M8 16L3 21" stroke="#aaa" stroke-width="1.5" fill="none"/></svg>

<!-- add modifier -->
<div class="a" style="left:1646px;top:508px;width:261px;height:28px;background:#545454;border-radius:6px"></div>
<svg width="16" height="16" style="left:1655px;top:514px"><path d="M8 1V15M1 8H15" stroke="#ddd" stroke-width="1.6"/></svg>
<div class="t j" style="left:1697px;top:513px;font-size:17px;color:#e6e6e6">モディファイアーを追加</div>

<!-- modifier panel -->
<div class="a" style="left:1644px;top:550px;width:263px;height:219px;background:#3a3a3a;border:1.5px solid #4772b3;border-radius:7px"></div>
<svg width="16" height="12" style="left:1655px;top:564px"><path d="M2 2L8 8L14 2" stroke="#ccc" stroke-width="1.5" fill="none"/></svg>
<svg width="22" height="22" style="left:1676px;top:559px" viewBox="0 0 22 22"><rect x="2" y="2" width="18" height="18" fill="none" stroke="#aaa" stroke-width="1.5"/><circle cx="11" cy="11" r="6" fill="none" stroke="#e6e6e6" stroke-width="1.6"/></svg>
<div class="a" style="left:1715px;top:556px;width:121px;height:27px;background:#282828;border-radius:6px;overflow:hidden">
 <div class="a" style="left:0;top:0;width:23px;height:27px;background:#4a4a4a"></div>
 <div class="a" style="left:23px;top:0;width:73px;height:27px;background:#4772b3"></div>
 <div class="a" style="left:47px;top:0;width:1px;height:27px;background:#3d5e94"></div>
 <div class="a" style="left:71px;top:0;width:1px;height:27px;background:#3d5e94"></div>
</div>
<svg width="122" height="27" style="left:1715px;top:556px" viewBox="0 0 122 27">
 <path d="M4 7H18L11 21Z" fill="none" stroke="#ddd" stroke-width="1.4"/><rect x="2" y="5" width="4" height="4" fill="#4a4a4a" stroke="#ddd" stroke-width="1.1"/><rect x="16" y="5" width="4" height="4" fill="#4a4a4a" stroke="#ddd" stroke-width="1.1"/><rect x="9" y="19" width="4" height="4" fill="#4a4a4a" stroke="#ddd" stroke-width="1.1"/>
 <path d="M28 8V21H42V12M30 8H34" stroke="#cfd8ea" stroke-width="1.1" fill="none"/><rect x="26.5" y="6.5" width="3.5" height="3.5" fill="#4772b3" stroke="#cfd8ea" stroke-width="1"/><rect x="26.5" y="19.5" width="3.5" height="3.5" fill="#4772b3" stroke="#cfd8ea" stroke-width="1"/><rect x="40.5" y="19.5" width="3.5" height="3.5" fill="#4772b3" stroke="#cfd8ea" stroke-width="1"/><rect x="38" y="3" width="6" height="6" fill="#fff"/>
 <rect x="51" y="8" width="17" height="11" rx="1" fill="none" stroke="#fff" stroke-width="1.8"/><path d="M56 23H63M59.5 19V23" stroke="#fff" stroke-width="1.6"/>
 <path d="M75 9H79L81 6H87L89 9H93V21H75Z" fill="#fff"/><circle cx="84" cy="15" r="4" fill="#4772b3"/><circle cx="84" cy="15" r="2.2" fill="#fff"/>
 <path d="M104 11L108.5 15.5L113 11" stroke="#ddd" stroke-width="1.5" fill="none"/>
</svg>
<svg width="16" height="16" style="left:1842px;top:562px"><path d="M2 2L14 14M14 2L2 14" stroke="#ddd" stroke-width="1.6"/></svg>
<svg width="18" height="8" style="left:1876px;top:566px"><g fill="#777"><circle cx="2" cy="2" r="1"/><circle cx="6.5" cy="2" r="1"/><circle cx="11" cy="2" r="1"/><circle cx="15.5" cy="2" r="1"/><circle cx="2" cy="6" r="1"/><circle cx="6.5" cy="6" r="1"/><circle cx="11" cy="6" r="1"/><circle cx="15.5" cy="6" r="1"/></g></svg>
<div class="a" style="left:1657px;top:599px;width:237px;height:28px;background:#545454;border-radius:6px;overflow:hidden"><div class="a" style="left:0;top:0;width:117px;height:28px;background:#4772b3"></div></div>
<div class="t" style="left:1666px;top:604px;font-size:17px;color:#fff"><span class="j">カトマルク</span>...</div>
<div class="t j" style="left:1800px;top:604px;font-size:17px;color:#e6e6e6">シンプル</div>
<div class="t" style="left:1669px;top:640px;font-size:17px;color:#e6e6e6"><span class="j">ビュー</span>...</div>
<div class="a" style="left:1748px;top:635px;width:117px;height:56px;background:#545454;border-radius:6px"></div>
<div class="a" style="left:1748px;top:662px;width:117px;height:1px;background:#474747"></div>
<div class="t" style="left:1800px;top:640px;font-size:17px;color:#e6e6e6">2</div>
<div class="t j" style="left:1666px;top:668px;font-size:17px;color:#e6e6e6">レンダー</div>
<div class="t" style="left:1800px;top:668px;font-size:17px;color:#e6e6e6">2</div>
<div class="a" style="left:1877px;top:645px;width:6px;height:6px;border-radius:50%;background:#ddd"></div>
<div class="a" style="left:1877px;top:674px;width:6px;height:6px;border-radius:50%;background:#ddd"></div>
<div class="a" style="left:1748px;top:704px;width:19px;height:19px;background:#4772b3;border-radius:4px"></div>
<svg width="19" height="19" style="left:1748px;top:704px"><path d="M4 9.5L8 13.5L15 5" stroke="#fff" stroke-width="2.2" fill="none"/></svg>
<div class="t j" style="left:1773px;top:706px;font-size:17px;color:#e6e6e6">最適化表示</div>
<div class="a" style="left:1877px;top:710px;width:6px;height:6px;border-radius:50%;background:#ddd"></div>
<svg width="12" height="16" style="left:1665px;top:741px"><path d="M3 2L9 8L3 14" stroke="#ccc" stroke-width="1.6" fill="none"/></svg>
<div class="t j" style="left:1686px;top:742px;font-size:17px;color:#e6e6e6">詳細設定</div>
<!-- NODE EDITOR -->
<style>
.nd{position:absolute;background:#303030;border-radius:4px;overflow:hidden;box-shadow:0 1px 3px rgba(0,0,0,.5)}
.nh{position:absolute;left:0;top:0;width:100%}
.sk{position:absolute;width:8.8px;height:8.8px;border-radius:50%;border:.8px solid #141414}
.fd{position:absolute;background:#545454;border-radius:3px;overflow:hidden}
.dd{position:absolute;background:#282828;border:1px solid #3a3a3a;border-radius:3px}
</style>
<div class="a" style="left:1px;top:488px;width:1582px;height:608px;background:#1d1d1d radial-gradient(circle at 40.5px 40.5px,#2c2c2c 0,#2c2c2c 1.1px,transparent 1.6px) 20px 38px/81px 81px;border-radius:8px;border:1px solid #2a2a2a;overflow:hidden">
 <div class="a" style="left:1573px;top:41px;width:6px;height:549px;background:#303030;border-radius:3px"></div>
 <div class="a" style="left:10px;top:599px;width:1558px;height:5px;background:#303030;border-radius:3px"></div>
</div>
<svg width="1920" height="1128" style="left:0;top:0">
 <clipPath id="neclip"><rect x="1" y="525" width="1582" height="571"/></clipPath>
 <g clip-path="url(#neclip)"><path d="M337 632.6C353.5 632.6 353.5 670.6 370 670.6" stroke="#6363c7" stroke-width="1.8" fill="none"/>
<path d="M483 632.6C499.8 632.6 499.8 694.4 516.6 694.4" stroke="#6363c7" stroke-width="1.8" fill="none"/>
<path d="M483 632.6C499.2 632.6 499.2 958.5 515.4 958.5" stroke="#6363c7" stroke-width="1.8" fill="none"/>
<path d="M638 616.8C658.5 616.8 658.5 714.4 679 714.4" stroke="#a1a1a1" stroke-width="1.8" fill="none"/>
<path d="M628.4 864.7C654.7 864.7 654.7 902.4 681 902.4" stroke="#a1a1a1" stroke-width="1.8" fill="none"/>
<path d="M628.4 864.7C654.2 864.7 654.2 1084.4 680 1084.4" stroke="#a1a1a1" stroke-width="1.8" fill="none"/>
<path d="M628.4 864.7C770.2 864.7 770.2 912.9 912 912.9" stroke="#a1a1a1" stroke-width="1.8" fill="none"/>
<defs><linearGradient id="lg1" x1="0" y1="0" x2="0" y2="1"><stop offset="0" stop-color="#c7c729"/><stop offset="1" stop-color="#a1a1a1"/></linearGradient></defs>
<path d="M873 592.3C889.0 592.3 889.0 697.4 905 697.4" stroke="url(#lg1)" stroke-width="1.8" fill="none"/>
<path d="M876 780.8C890.5 780.8 890.5 714.2 905 714.2" stroke="#d2d28c" stroke-width="1.8" fill="none"/>
<path d="M875 963.3C890.0 963.3 890.0 730.9 905 730.9" stroke="#d2d28c" stroke-width="1.8" fill="none"/>
<path d="M1018.7 598.5C1035.8 598.5 1035.8 620.7 1053 620.7" stroke="#d2d28c" stroke-width="1.8" fill="none"/>
<path d="M1025 823.8C1039.0 823.8 1039.0 705.5 1053 705.5" stroke="#6363c7" stroke-width="1.8" fill="none"/>
<path d="M1247 602.8C1266.5 602.8 1266.5 622.2 1286 622.2" stroke="#63c763" stroke-width="1.8" fill="none"/></g>
</svg>
<div class="a" style="left:0;top:0;width:1920px;height:1096px;overflow:hidden;clip-path:inset(525px 337px 0 1px)">
<div class="nd" style="left:224px;top:605px;width:113px;height:183px;"><div class="nh" style="height:16px;background:#83314a"></div></div>
<svg width="10" height="8" style="left:231px;top:610.0px"><path d="M1.5 1.5L5 5L8.5 1.5" stroke="#ddd" stroke-width="1.2" fill="none"/></svg>
<div class="t" style="left:244.0px;top:608.3px;font-size:9.5px;color:#e6e6e6"><span class="j">テクスチャ座標</span></div>
<div class="t" style="right:1590.3px;top:627.6px;font-size:9px;color:#dcdcdc"><span class="j">生成</span></div>
<div class="sk" style="left:332.6px;top:628.2px;background:#6363c7"></div>
<div class="t" style="right:1590.3px;top:644.5px;font-size:9px;color:#dcdcdc"><span class="j">ノーマル</span></div>
<div class="sk" style="left:332.6px;top:645.1px;background:#6363c7"></div>
<div class="t" style="right:1593.0px;top:661.6px;font-size:9px;color:#dcdcdc">UV</div>
<div class="sk" style="left:332.6px;top:662.2px;background:#6363c7"></div>
<div class="t" style="right:1590.3px;top:678.4px;font-size:9px;color:#dcdcdc"><span class="j">オブジェクト</span></div>
<div class="sk" style="left:332.6px;top:679.0px;background:#6363c7"></div>
<div class="t" style="right:1590.3px;top:695.0px;font-size:9px;color:#dcdcdc"><span class="j">カメラ</span></div>
<div class="sk" style="left:332.6px;top:695.6px;background:#6363c7"></div>
<div class="t" style="right:1590.3px;top:712.0px;font-size:9px;color:#dcdcdc"><span class="j">ウィンドウ</span></div>
<div class="sk" style="left:332.6px;top:712.6px;background:#6363c7"></div>
<div class="t" style="right:1590.3px;top:728.9px;font-size:9px;color:#dcdcdc"><span class="j">反射</span></div>
<div class="sk" style="left:332.6px;top:729.5px;background:#6363c7"></div>
<div class="t" style="left:232.0px;top:750.0px;font-size:9px;color:#dcdcdc"><span class="j">オブ</span>...</div>
<div class="dd" style="left:263px;top:748px;width:65px;height:15px;background:#1d1d1d"></div>
<svg width="12" height="12" style="left:266px;top:749.5px" viewBox="0 0 12 12"><path d="M1 3V1H3M9 1H11V3M11 9V11H9M3 11H1V9" stroke="#ccc" fill="none"/><rect x="3" y="3" width="6" height="6" fill="#e6e6e6"/></svg>
<div class="t" style="left:282.0px;top:750.8px;font-size:8.5px;color:#777"><span class="j">オブジ</span></div>
<svg width="12" height="12" style="left:313px;top:749px" viewBox="0 0 12 12"><path d="M2 10L7 5M6 2L10 6M8 1L11 4" stroke="#ddd" stroke-width="1.6" fill="none"/></svg>
<div class="a" style="left:231px;top:769.5px;width:11px;height:11px;background:#545454;border-radius:2px"></div>
<div class="t" style="left:246.0px;top:770.0px;font-size:9px;color:#dcdcdc"><span class="j">インスタンサー</span>...</div>
<div class="nd" style="left:370px;top:606px;width:113px;height:273px;"><div class="nh" style="height:15px;background:#3c3c83"></div></div>
<svg width="10" height="8" style="left:377px;top:610.5px"><path d="M1.5 1.5L5 5L8.5 1.5" stroke="#ddd" stroke-width="1.2" fill="none"/></svg>
<div class="t" style="left:390.0px;top:608.8px;font-size:9.5px;color:#e6e6e6"><span class="j">マッピング</span></div>
<div class="t" style="right:1444.3px;top:627.6px;font-size:9px;color:#dcdcdc"><span class="j">ベクトル</span></div>
<div class="sk" style="left:478.6px;top:628.2px;background:#6363c7"></div>
<div class="t" style="left:378.0px;top:649.0px;font-size:9px;color:#dcdcdc"><span class="j">タイプ</span>:</div>
<div class="dd" style="left:409px;top:647px;width:65.0px;height:14.0px"></div>
<div class="t" style="left:416.0px;top:649.0px;font-size:9px;color:#dcdcdc"><span class="j">ポイント</span></div>
<svg width="8" height="6" style="left:463.0px;top:652.0px"><path d="M1 1L4 4L7 1" stroke="#ccc" stroke-width="1.1" fill="none"/></svg>
<div class="t" style="left:378.0px;top:665.6px;font-size:9px;color:#dcdcdc"><span class="j">ベクトル</span></div>
<div class="sk" style="left:365.6px;top:666.2px;background:#6363c7"></div>
<div class="t" style="left:378.0px;top:682.6px;font-size:9px;color:#dcdcdc"><span class="j">位置</span></div>
<div class="sk" style="left:365.6px;top:683.2px;background:#6363c7"></div>
<div class="fd" style="left:378px;top:699px;width:96px;height:45.0px"></div>
<div class="t" style="left:388.0px;top:701.0px;font-size:9.5px;color:#e0e0e0">X</div>
<div class="t" style="right:1457.0px;top:701.0px;font-size:9.5px;color:#e0e0e0">0 m</div>
<div class="a" style="left:378px;top:713.5px;width:96px;height:1px;background:#474747"></div>
<div class="t" style="left:388.0px;top:715.8px;font-size:9.5px;color:#e0e0e0">Y</div>
<div class="t" style="right:1457.0px;top:715.8px;font-size:9.5px;color:#e0e0e0">0 m</div>
<div class="a" style="left:378px;top:728.5px;width:96px;height:1px;background:#474747"></div>
<div class="t" style="left:388.0px;top:731.0px;font-size:9.5px;color:#e0e0e0">Z</div>
<div class="t" style="right:1457.0px;top:731.0px;font-size:9.5px;color:#e0e0e0">0 m</div>
<div class="t" style="left:378.0px;top:749.0px;font-size:9px;color:#dcdcdc"><span class="j">回転</span></div>
<div class="sk" style="left:365.6px;top:749.6px;background:#6363c7"></div>
<div class="fd" style="left:378px;top:763px;width:96px;height:46.0px"></div>
<div class="t" style="left:388.0px;top:765.5px;font-size:9.5px;color:#e0e0e0">X</div>
<div class="t" style="right:1457.0px;top:765.5px;font-size:9.5px;color:#e0e0e0">0°</div>
<div class="a" style="left:378px;top:778.5px;width:96px;height:1px;background:#474747"></div>
<div class="t" style="left:388.0px;top:780.8px;font-size:9.5px;color:#e0e0e0">Y</div>
<div class="t" style="right:1457.0px;top:780.8px;font-size:9.5px;color:#e0e0e0">0°</div>
<div class="a" style="left:378px;top:793.5px;width:96px;height:1px;background:#474747"></div>
<div class="t" style="left:388.0px;top:796.0px;font-size:9.5px;color:#e0e0e0">Z</div>
<div class="t" style="right:1457.0px;top:796.0px;font-size:9.5px;color:#e0e0e0">0°</div>
<div class="t" style="left:378.0px;top:813.8px;font-size:9px;color:#dcdcdc"><span class="j">スケール</span></div>
<div class="sk" style="left:365.6px;top:814.3px;background:#6363c7"></div>
<div class="fd" style="left:378px;top:829.6px;width:96px;height:45.4px"></div>
<div class="t" style="left:388.0px;top:832.1px;font-size:9.5px;color:#e0e0e0">X</div>
<div class="t" style="right:1457.0px;top:832.1px;font-size:9.5px;color:#e0e0e0">1.000</div>
<div class="a" style="left:378px;top:845.0px;width:96px;height:1px;background:#474747"></div>
<div class="t" style="left:388.0px;top:847.3px;font-size:9.5px;color:#e0e0e0">Y</div>
<div class="t" style="right:1457.0px;top:847.3px;font-size:9.5px;color:#e0e0e0">1.000</div>
<div class="a" style="left:378px;top:860.0px;width:96px;height:1px;background:#474747"></div>
<div class="t" style="left:388.0px;top:862.3px;font-size:9.5px;color:#e0e0e0">Z</div>
<div class="t" style="right:1457.0px;top:862.3px;font-size:9.5px;color:#e0e0e0">1.000</div>
<div class="nd" style="left:517px;top:573px;width:121px;height:234px;"><div class="nh" style="height:16px;background:#79461d"></div></div>
<svg width="10" height="8" style="left:524px;top:578.0px"><path d="M1.5 1.5L5 5L8.5 1.5" stroke="#ddd" stroke-width="1.2" fill="none"/></svg>
<div class="t" style="left:537.0px;top:576.3px;font-size:9.5px;color:#e6e6e6"><span class="j">波テクスチャ</span></div>
<div class="t" style="right:1289.3px;top:594.9px;font-size:9px;color:#dcdcdc"><span class="j">カラー</span></div>
<div class="sk" style="left:633.6px;top:595.5px;background:#c7c729"></div>
<div class="t" style="right:1289.3px;top:611.8px;font-size:9px;color:#dcdcdc"><span class="j">係数</span></div>
<div class="sk" style="left:633.6px;top:612.4px;background:#a1a1a1"></div>
<div class="dd" style="left:524px;top:631.4px;width:105.0px;height:15.0px"></div>
<div class="t" style="left:531.0px;top:633.9px;font-size:9px;color:#dcdcdc"><span class="j">バンド</span></div>
<svg width="8" height="6" style="left:618.0px;top:636.9px"><path d="M1 1L4 4L7 1" stroke="#ccc" stroke-width="1.1" fill="none"/></svg>
<div class="dd" style="left:524px;top:651px;width:105.0px;height:14.6px"></div>
<div class="t" style="left:531.0px;top:653.3px;font-size:9px;color:#dcdcdc">Z</div>
<svg width="8" height="6" style="left:618.0px;top:656.3px"><path d="M1 1L4 4L7 1" stroke="#ccc" stroke-width="1.1" fill="none"/></svg>
<div class="dd" style="left:524px;top:670.6px;width:105.0px;height:15.0px"></div>
<div class="t" style="left:531.0px;top:673.1px;font-size:9px;color:#dcdcdc"><span class="j">サイン</span></div>
<svg width="8" height="6" style="left:618.0px;top:676.1px"><path d="M1 1L4 4L7 1" stroke="#ccc" stroke-width="1.1" fill="none"/></svg>
<div class="t" style="left:525.0px;top:689.4px;font-size:9px;color:#dcdcdc"><span class="j">ベクトル</span></div>
<div class="sk" style="left:512.2px;top:690.0px;background:#6363c7"></div>
<div class="fd" style="left:524px;top:704.7px;width:105.0px;height:13.1px"></div>
<div class="t" style="left:536.0px;top:706.9px;font-size:9px;color:#e0e0e0"><span class="j">スケール</span></div>
<div class="t" style="right:1300.0px;top:706.6px;font-size:9.5px;color:#e0e0e0">0.230</div>
<div class="sk" style="left:512.2px;top:707.5px;background:#a1a1a1"></div>
<div class="fd" style="left:524px;top:721.3px;width:105.0px;height:13.8px"></div>
<div class="t" style="left:536.0px;top:723.8px;font-size:9px;color:#e0e0e0"><span class="j">歪み</span></div>
<div class="t" style="right:1300.0px;top:723.6px;font-size:9.5px;color:#e0e0e0">0.300</div>
<div class="sk" style="left:512.2px;top:724.4px;background:#a1a1a1"></div>
<div class="fd" style="left:524px;top:738.6px;width:105.0px;height:12.6px"></div>
<div class="t" style="left:536.0px;top:740.5px;font-size:9px;color:#e0e0e0"><span class="j">細かさ</span></div>
<div class="t" style="right:1300.0px;top:740.3px;font-size:9.5px;color:#e0e0e0">0.000000</div>
<div class="sk" style="left:512.2px;top:741.1px;background:#a1a1a1"></div>
<div class="fd" style="left:524px;top:755.4px;width:105.0px;height:12.7px"></div>
<div class="t" style="left:536.0px;top:757.4px;font-size:9px;color:#e0e0e0"><span class="j">細部のスケ</span>...</div>
<div class="t" style="right:1300.0px;top:757.1px;font-size:9.5px;color:#e0e0e0">4.300</div>
<div class="sk" style="left:512.2px;top:757.9px;background:#a1a1a1"></div>
<div class="fd" style="left:524px;top:772px;width:105.0px;height:12.7px"><div class="a" style="left:0;top:0;width:52.5px;height:100%;background:#4772b3"></div></div>
<div class="t" style="left:536.0px;top:774.0px;font-size:9px;color:#e0e0e0"><span class="j">細部の粗さ</span></div>
<div class="t" style="right:1300.0px;top:773.7px;font-size:9.5px;color:#e0e0e0">0.500</div>
<div class="sk" style="left:512.2px;top:774.6px;background:#a1a1a1"></div>
<div class="fd" style="left:524px;top:788.6px;width:105.0px;height:12.7px"></div>
<div class="t" style="left:536.0px;top:790.6px;font-size:9px;color:#e0e0e0"><span class="j">位相オフ</span>...</div>
<div class="t" style="right:1300.0px;top:790.3px;font-size:9.5px;color:#e0e0e0">11.600</div>
<div class="sk" style="left:512.2px;top:791.1px;background:#a1a1a1"></div>
<div class="nd" style="left:679px;top:566px;width:194px;height:159px;"><div class="nh" style="height:15px;background:#246283"></div></div>
<svg width="10" height="8" style="left:686px;top:570.5px"><path d="M1.5 1.5L5 5L8.5 1.5" stroke="#ddd" stroke-width="1.2" fill="none"/></svg>
<div class="t" style="left:699.0px;top:568.8px;font-size:9.5px;color:#e6e6e6"><span class="j">カラーランプ</span></div>
<div class="t" style="right:1054.3px;top:587.3px;font-size:9px;color:#dcdcdc"><span class="j">カラー</span></div>
<div class="sk" style="left:868.6px;top:587.9px;background:#c7c729"></div>
<div class="t" style="right:1054.3px;top:604.8px;font-size:9px;color:#dcdcdc"><span class="j">アルファ</span></div>
<div class="sk" style="left:868.6px;top:605.4px;background:#a1a1a1"></div>
<div class="t" style="left:693.0px;top:628.4px;font-size:12px;color:#dcdcdc">+</div>
<div class="t" style="left:714.0px;top:628.4px;font-size:12px;color:#dcdcdc"><span class="j">−</span></div>
<svg width="10" height="8" style="left:735px;top:632px"><path d="M1 1.5L5 5.5L9 1.5" stroke="#ccc" stroke-width="1.2" fill="none"/></svg>
<div class="dd" style="left:761.6px;top:627.5px;width:102.5px;height:14.9px"></div>
<div class="a" style="left:812.3px;top:627.5px;width:1px;height:14.9px;background:#3a3a3a"></div>
<div class="t" style="left:767.6px;top:629.7px;font-size:9.5px;color:#dcdcdc">RGB</div>
<div class="t" style="left:818.3px;top:630.0px;font-size:9px;color:#dcdcdc"><span class="j">リニア</span></div>
<svg width="8" height="6" style="left:802.3px;top:633.0px"><path d="M1 1L4 4L7 1" stroke="#ccc" stroke-width="1.1" fill="none"/></svg>
<svg width="8" height="6" style="left:854.1px;top:633.0px"><path d="M1 1L4 4L7 1" stroke="#ccc" stroke-width="1.1" fill="none"/></svg>
<div class="a" style="left:686.7px;top:647.6px;width:175.1px;height:13.8px;background:linear-gradient(90deg,#000 0%,#fff 49.8%,#fff 100%)"></div>
<svg width="12" height="24" style="left:684.0px;top:646.6px"><path d="M6 0V6" stroke="#ddd" stroke-width="1" stroke-dasharray="1.5 1"/><path d="M1.5 11.5L6 6.5L10.5 11.5Z" fill="#9a9a9a" stroke="#222" stroke-width=".8"/><rect x="1.5" y="11.5" width="9" height="6.5" fill="#000" stroke="#222" stroke-width=".8"/></svg>
<svg width="12" height="24" style="left:769.0px;top:646.6px"><path d="M6 0V6" stroke="#222" stroke-width="1" stroke-dasharray="1.5 1"/><path d="M1.5 11.5L6 6.5L10.5 11.5Z" fill="#9a9a9a" stroke="#222" stroke-width=".8"/><rect x="1.5" y="11.5" width="9" height="6.5" fill="#fff" stroke="#222" stroke-width=".8"/></svg>
<div class="fd" style="left:0px;display:none"></div>
<div class="fd" style="left:686px;top:670.6px;width:50.2px;height:15.0px"></div>
<div class="t" style="left:708.1px;top:672.9px;font-size:9.5px;color:#e0e0e0">1</div>
<div class="fd" style="left:744.8px;top:670.6px;width:119.3px;height:15.0px"></div>
<div class="t" style="left:753.8px;top:673.1px;font-size:9px;color:#e0e0e0"><span class="j">位置</span></div>
<div class="t" style="right:1064.9px;top:672.9px;font-size:9.5px;color:#e0e0e0">0.498</div>
<div class="a" style="left:686px;top:690.2px;width:178.1px;height:13.8px;background:#fff;border-radius:3px"></div>
<div class="t" style="left:688.0px;top:709.4px;font-size:9px;color:#dcdcdc"><span class="j">係数</span></div>
<div class="sk" style="left:674.6px;top:710.0px;background:#a1a1a1"></div>
<div class="nd" style="left:905px;top:571px;width:114px;height:174px;border:1.5px solid #f0f0f0;"><div class="nh" style="height:17px;background:#6d6c1e"></div></div>
<svg width="10" height="8" style="left:912px;top:576.5px"><path d="M1.5 1.5L5 5L8.5 1.5" stroke="#ddd" stroke-width="1.2" fill="none"/></svg>
<div class="t" style="left:925.0px;top:574.8px;font-size:9.5px;color:#e6e6e6"><span class="j">ミックス</span></div>
<div class="t" style="right:908.3px;top:593.5px;font-size:9px;color:#dcdcdc"><span class="j">結果</span></div>
<div class="sk" style="left:1014.3px;top:594.1px;background:#c7c729"></div>
<div class="dd" style="left:912.7px;top:614.9px;width:96.8px;height:14.1px"></div>
<div class="t" style="left:919.7px;top:617.0px;font-size:9px;color:#dcdcdc"><span class="j">カラー</span></div>
<svg width="8" height="6" style="left:998.5px;top:620.0px"><path d="M1 1L4 4L7 1" stroke="#ccc" stroke-width="1.1" fill="none"/></svg>
<div class="dd" style="left:912.7px;top:634.8px;width:96.8px;height:13.8px"></div>
<div class="t" style="left:919.7px;top:636.8px;font-size:9px;color:#dcdcdc"><span class="j">ミックス</span></div>
<svg width="8" height="6" style="left:998.5px;top:639.7px"><path d="M1 1L4 4L7 1" stroke="#ccc" stroke-width="1.1" fill="none"/></svg>
<div class="a" style="left:913px;top:655.1px;width:11px;height:11px;background:#545454;border-radius:2px"></div>
<div class="t" style="left:928.0px;top:655.6px;font-size:9px;color:#dcdcdc"><span class="j">結果を制限</span></div>
<div class="a" style="left:913px;top:674.4px;width:11px;height:11px;background:#4772b3;border-radius:2px"></div>
<svg width="11" height="11" style="left:913px;top:674.4px"><path d="M2.5 5.5L4.8 8L8.8 3" stroke="#fff" stroke-width="1.5" fill="none"/></svg>
<div class="t" style="left:928.0px;top:674.9px;font-size:9px;color:#dcdcdc"><span class="j">係数を制限</span></div>
<div class="t" style="left:913.0px;top:692.4px;font-size:9px;color:#dcdcdc"><span class="j">係数</span></div>
<div class="sk" style="left:900.6px;top:693.0px;background:#a1a1a1"></div>
<div class="t" style="left:913.0px;top:709.0px;font-size:9.5px;color:#dcdcdc">A</div>
<div class="sk" style="left:900.6px;top:709.8px;background:#c7c729"></div>
<div class="t" style="left:913.0px;top:725.7px;font-size:9.5px;color:#dcdcdc">B</div>
<div class="sk" style="left:900.6px;top:726.5px;background:#c7c729"></div>
<div class="nd" style="left:1053px;top:577px;width:194px;height:260px;"><div class="nh" style="height:15px;background:#2b652b"></div></div>
<svg width="10" height="8" style="left:1060px;top:581.5px"><path d="M1.5 1.5L5 5L8.5 1.5" stroke="#ddd" stroke-width="1.2" fill="none"/></svg>
<div class="t" style="left:1073.0px;top:579.8px;font-size:9.5px;color:#e6e6e6"><span class="j">プリンシプル</span>BSDF</div>
<div class="t" style="right:683.0px;top:597.6px;font-size:9.5px;color:#dcdcdc">BSDF</div>
<div class="sk" style="left:1242.6px;top:598.4px;background:#63c763"></div>
<div class="t" style="left:1061.0px;top:615.8px;font-size:9px;color:#dcdcdc"><span class="j">ベースカラー</span></div>
<div class="sk" style="left:1048.6px;top:616.3px;background:#c7c729"></div>
<div class="fd" style="left:1061px;top:631.3px;width:178.0px;height:12.3px"></div>
<div class="t" style="left:1073.0px;top:633.1px;font-size:9px;color:#e0e0e0"><span class="j">メタリック</span></div>
<div class="t" style="right:690.0px;top:632.8px;font-size:9.5px;color:#e0e0e0">0.000</div>
<div class="sk" style="left:1048.6px;top:633.6px;background:#a1a1a1"></div>
<div class="fd" style="left:1061px;top:649px;width:178.0px;height:11.6px"><div class="a" style="left:0;top:0;width:89.0px;height:100%;background:#4772b3"></div></div>
<div class="t" style="left:1073.0px;top:650.4px;font-size:9px;color:#e0e0e0"><span class="j">粗さ</span></div>
<div class="t" style="right:690.0px;top:650.2px;font-size:9.5px;color:#e0e0e0">0.500</div>
<div class="sk" style="left:1048.6px;top:651.0px;background:#a1a1a1"></div>
<div class="fd" style="left:1061px;top:665px;width:178.0px;height:12.3px"></div>
<div class="t" style="left:1073.0px;top:666.8px;font-size:9px;color:#e0e0e0">IOR</div>
<div class="t" style="right:690.0px;top:666.5px;font-size:9.5px;color:#e0e0e0">1.500</div>
<div class="sk" style="left:1048.6px;top:667.4px;background:#a1a1a1"></div>
<div class="fd" style="left:1061px;top:682px;width:178.0px;height:12.3px"><div class="a" style="left:0;top:0;width:178.0px;height:100%;background:#4772b3"></div></div>
<div class="t" style="left:1073.0px;top:683.8px;font-size:9px;color:#e0e0e0"><span class="j">アルファ</span></div>
<div class="t" style="right:690.0px;top:683.5px;font-size:9.5px;color:#e0e0e0">1.000</div>
<div class="sk" style="left:1048.6px;top:684.4px;background:#a1a1a1"></div>
<div class="t" style="left:1061.0px;top:700.5px;font-size:9px;color:#dcdcdc"><span class="j">ノーマル</span></div>
<div class="sk" style="left:1048.6px;top:701.1px;background:#6363c7"></div>
<svg width="8" height="10" style="left:1065px;top:717.0px"><path d="M2 1L6 5L2 9" stroke="#ccc" stroke-width="1.1" fill="none"/></svg>
<div class="t" style="left:1077.0px;top:716.5px;font-size:9px;color:#dcdcdc"><span class="j">ディフューズ</span></div>
<svg width="8" height="10" style="left:1065px;top:732.1px"><path d="M2 1L6 5L2 9" stroke="#ccc" stroke-width="1.1" fill="none"/></svg>
<div class="t" style="left:1077.0px;top:731.6px;font-size:9px;color:#dcdcdc"><span class="j">サブサーフェス</span></div>
<svg width="8" height="10" style="left:1065px;top:747.1px"><path d="M2 1L6 5L2 9" stroke="#ccc" stroke-width="1.1" fill="none"/></svg>
<div class="t" style="left:1077.0px;top:746.6px;font-size:9px;color:#dcdcdc"><span class="j">スペキュラー</span></div>
<svg width="8" height="10" style="left:1065px;top:762.5px"><path d="M2 1L6 5L2 9" stroke="#ccc" stroke-width="1.1" fill="none"/></svg>
<div class="t" style="left:1077.0px;top:762.0px;font-size:9px;color:#dcdcdc"><span class="j">伝播</span></div>
<svg width="8" height="10" style="left:1065px;top:777.5px"><path d="M2 1L6 5L2 9" stroke="#ccc" stroke-width="1.1" fill="none"/></svg>
<div class="t" style="left:1077.0px;top:777.0px;font-size:9px;color:#dcdcdc"><span class="j">コート</span></div>
<svg width="8" height="10" style="left:1065px;top:792.8px"><path d="M2 1L6 5L2 9" stroke="#ccc" stroke-width="1.1" fill="none"/></svg>
<div class="t" style="left:1077.0px;top:792.3px;font-size:9px;color:#dcdcdc"><span class="j">シーン</span></div>
<svg width="8" height="10" style="left:1065px;top:808.2px"><path d="M2 1L6 5L2 9" stroke="#ccc" stroke-width="1.1" fill="none"/></svg>
<div class="t" style="left:1077.0px;top:807.8px;font-size:9px;color:#dcdcdc"><span class="j">放射</span></div>
<svg width="8" height="10" style="left:1065px;top:823.1px"><path d="M2 1L6 5L2 9" stroke="#ccc" stroke-width="1.1" fill="none"/></svg>
<div class="t" style="left:1077.0px;top:822.6px;font-size:9px;color:#dcdcdc"><span class="j">薄膜</span></div>
<div class="nd" style="left:1286px;top:577px;width:113px;height:108px;"><div class="nh" style="height:15px;background:#4b1f2a"></div></div>
<svg width="10" height="8" style="left:1293px;top:581.5px"><path d="M1.5 1.5L5 5L8.5 1.5" stroke="#ddd" stroke-width="1.2" fill="none"/></svg>
<div class="t" style="left:1306.0px;top:579.8px;font-size:9.5px;color:#e6e6e6"><span class="j">マテリアル出力</span></div>
<div class="dd" style="left:1293.3px;top:598.6px;width:96.9px;height:14.9px"></div>
<div class="t" style="left:1300.3px;top:601.1px;font-size:9px;color:#dcdcdc"><span class="j">すべて</span></div>
<svg width="8" height="6" style="left:1379.2px;top:604.0px"><path d="M1 1L4 4L7 1" stroke="#ccc" stroke-width="1.1" fill="none"/></svg>
<div class="t" style="left:1294.0px;top:617.2px;font-size:9px;color:#dcdcdc"><span class="j">サーフェス</span></div>
<div class="sk" style="left:1281.6px;top:617.8px;background:#63c763"></div>
<div class="t" style="left:1294.0px;top:634.6px;font-size:9px;color:#dcdcdc"><span class="j">ボリューム</span></div>
<div class="sk" style="left:1281.6px;top:635.2px;background:#63c763"></div>
<div class="t" style="left:1294.0px;top:652.0px;font-size:9px;color:#dcdcdc"><span class="j">ディスプレイスメント</span></div>
<div class="sk" style="left:1281.6px;top:652.6px;background:#6363c7"></div>
<div class="t" style="left:1294.0px;top:668.8px;font-size:9px;color:#dcdcdc"><span class="j">幅</span></div>
<div class="sk" style="left:1281.6px;top:669.4px;background:#a1a1a1"></div>
<div class="nd" style="left:681px;top:754px;width:195px;height:160px;"><div class="nh" style="height:16px;background:#246283"></div></div>
<svg width="10" height="8" style="left:688px;top:759.0px"><path d="M1.5 1.5L5 5L8.5 1.5" stroke="#ddd" stroke-width="1.2" fill="none"/></svg>
<div class="t" style="left:701.0px;top:757.3px;font-size:9.5px;color:#e6e6e6"><span class="j">カラーランプ</span></div>
<div class="t" style="right:1051.3px;top:775.8px;font-size:9px;color:#dcdcdc"><span class="j">カラー</span></div>
<div class="sk" style="left:871.6px;top:776.4px;background:#c7c729"></div>
<div class="t" style="right:1051.3px;top:792.8px;font-size:9px;color:#dcdcdc"><span class="j">アルファ</span></div>
<div class="sk" style="left:871.6px;top:793.4px;background:#a1a1a1"></div>
<div class="t" style="left:695.0px;top:816.4px;font-size:12px;color:#dcdcdc">+</div>
<div class="t" style="left:716.0px;top:816.4px;font-size:12px;color:#dcdcdc"><span class="j">−</span></div>
<svg width="10" height="8" style="left:737px;top:820px"><path d="M1 1.5L5 5.5L9 1.5" stroke="#ccc" stroke-width="1.2" fill="none"/></svg>
<div class="dd" style="left:764.4px;top:815px;width:103.1px;height:15.6px"></div>
<div class="a" style="left:815.5px;top:815px;width:1px;height:15.6px;background:#3a3a3a"></div>
<div class="t" style="left:770.4px;top:817.6px;font-size:9.5px;color:#dcdcdc">RGB</div>
<div class="t" style="left:821.5px;top:817.8px;font-size:9px;color:#dcdcdc"><span class="j">リニア</span></div>
<svg width="8" height="6" style="left:805.5px;top:820.8px"><path d="M1 1L4 4L7 1" stroke="#ccc" stroke-width="1.1" fill="none"/></svg>
<svg width="8" height="6" style="left:857.5px;top:820.8px"><path d="M1 1L4 4L7 1" stroke="#ccc" stroke-width="1.1" fill="none"/></svg>
<div class="a" style="left:692.7px;top:835.8px;width:172.9px;height:14.4px;background:linear-gradient(90deg,#c8ad78,#f8cca8)"></div>
<svg width="12" height="24" style="left:687.0px;top:834.8px"><path d="M6 0V6" stroke="#ddd" stroke-width="1" stroke-dasharray="1.5 1"/><path d="M1.5 11.5L6 6.5L10.5 11.5Z" fill="#9a9a9a" stroke="#222" stroke-width=".8"/><rect x="1.5" y="11.5" width="9" height="6.5" fill="#c8ad78" stroke="#222" stroke-width=".8"/></svg>
<svg width="12" height="24" style="left:859.0px;top:834.8px"><path d="M6 0V6" stroke="#222" stroke-width="1" stroke-dasharray="1.5 1"/><path d="M1.5 11.5L6 6.5L10.5 11.5Z" fill="#9a9a9a" stroke="#222" stroke-width=".8"/><rect x="1.5" y="11.5" width="9" height="6.5" fill="#f8cca8" stroke="#222" stroke-width=".8"/></svg>
<div class="fd" style="left:0px;display:none"></div>
<div class="fd" style="left:688px;top:858.5px;width:50.9px;height:14.9px"></div>
<div class="t" style="left:710.5px;top:860.7px;font-size:9.5px;color:#e0e0e0">0</div>
<div class="fd" style="left:747.5px;top:858.5px;width:119.2px;height:14.9px"></div>
<div class="t" style="left:756.5px;top:861.0px;font-size:9px;color:#e0e0e0"><span class="j">位置</span></div>
<div class="t" style="right:1062.3px;top:860.7px;font-size:9.5px;color:#e0e0e0">0.000</div>
<div class="a" style="left:688px;top:878.8px;width:178.7px;height:13.7px;background:#c9b27c;border-radius:3px"></div>
<div class="t" style="left:690.0px;top:897.4px;font-size:9px;color:#dcdcdc"><span class="j">係数</span></div>
<div class="sk" style="left:676.6px;top:898.0px;background:#a1a1a1"></div>
<div class="nd" style="left:912px;top:797px;width:113px;height:143px;"><div class="nh" style="height:16px;background:#3c3c83"></div></div>
<svg width="10" height="8" style="left:919px;top:802.0px"><path d="M1.5 1.5L5 5L8.5 1.5" stroke="#ddd" stroke-width="1.2" fill="none"/></svg>
<div class="t" style="left:932.0px;top:800.3px;font-size:9.5px;color:#e6e6e6"><span class="j">バンプ</span></div>
<div class="t" style="right:902.3px;top:818.8px;font-size:9px;color:#dcdcdc"><span class="j">ノーマル</span></div>
<div class="sk" style="left:1020.6px;top:819.4px;background:#6363c7"></div>
<div class="a" style="left:920px;top:839.5px;width:11px;height:11px;background:#545454;border-radius:2px"></div>
<div class="t" style="left:935.0px;top:840.0px;font-size:9px;color:#dcdcdc"><span class="j">反転</span></div>
<div class="fd" style="left:920px;top:855.6px;width:96.0px;height:12.7px"><div class="a" style="left:0;top:0;width:17.0px;height:100%;background:#4772b3"></div></div>
<div class="t" style="left:932.0px;top:857.6px;font-size:9px;color:#e0e0e0"><span class="j">強さ</span></div>
<div class="t" style="right:913.0px;top:857.3px;font-size:9.5px;color:#e0e0e0">0.177</div>
<div class="sk" style="left:907.6px;top:858.1px;background:#a1a1a1"></div>
<div class="fd" style="left:920px;top:872.6px;width:96.0px;height:12.2px"></div>
<div class="t" style="left:932.0px;top:874.3px;font-size:9px;color:#e0e0e0"><span class="j">距離</span></div>
<div class="t" style="right:913.0px;top:874.1px;font-size:9.5px;color:#e0e0e0">0.001</div>
<div class="sk" style="left:907.6px;top:874.9px;background:#a1a1a1"></div>
<div class="fd" style="left:920px;top:890px;width:96.0px;height:12.2px"></div>
<div class="t" style="left:932.0px;top:891.8px;font-size:9px;color:#e0e0e0"><span class="j">フィルタ</span>...</div>
<div class="t" style="right:913.0px;top:891.5px;font-size:9.5px;color:#e0e0e0">0.100</div>
<div class="sk" style="left:907.6px;top:892.3px;background:#a1a1a1"></div>
<div class="t" style="left:920.0px;top:907.9px;font-size:9px;color:#dcdcdc"><span class="j">高さ</span></div>
<div class="sk" style="left:907.6px;top:908.5px;background:#a1a1a1"></div>
<div class="t" style="left:920.0px;top:924.8px;font-size:9px;color:#dcdcdc"><span class="j">ノーマル</span></div>
<div class="sk" style="left:907.6px;top:925.4px;background:#6363c7"></div>
<div class="nd" style="left:515px;top:838px;width:113px;height:217px;"><div class="nh" style="height:15.5px;background:#79461d"></div></div>
<svg width="10" height="8" style="left:522px;top:842.8px"><path d="M1.5 1.5L5 5L8.5 1.5" stroke="#ddd" stroke-width="1.2" fill="none"/></svg>
<div class="t" style="left:535.0px;top:841.0px;font-size:9.5px;color:#e6e6e6"><span class="j">ノイズテクスチャ</span></div>
<div class="t" style="right:1299.3px;top:859.8px;font-size:9px;color:#dcdcdc"><span class="j">係数</span></div>
<div class="sk" style="left:624.0px;top:860.3px;background:#a1a1a1"></div>
<div class="t" style="right:1299.3px;top:876.6px;font-size:9px;color:#dcdcdc"><span class="j">カラー</span></div>
<div class="sk" style="left:624.0px;top:877.2px;background:#c7c729"></div>
<div class="dd" style="left:523.6px;top:895.7px;width:96.8px;height:14.9px"></div>
<div class="t" style="left:530.6px;top:898.2px;font-size:9px;color:#dcdcdc">3D</div>
<svg width="8" height="6" style="left:609.4px;top:901.2px"><path d="M1 1L4 4L7 1" stroke="#ccc" stroke-width="1.1" fill="none"/></svg>
<div class="dd" style="left:523.6px;top:915.6px;width:96.8px;height:13.6px"></div>
<div class="t" style="left:530.6px;top:917.5px;font-size:9px;color:#dcdcdc">fBM</div>
<svg width="8" height="6" style="left:609.4px;top:920.4px"><path d="M1 1L4 4L7 1" stroke="#ccc" stroke-width="1.1" fill="none"/></svg>
<div class="a" style="left:524px;top:936.2px;width:11px;height:11px;background:#4772b3;border-radius:2px"></div>
<svg width="11" height="11" style="left:524px;top:936.2px"><path d="M2.5 5.5L4.8 8L8.8 3" stroke="#fff" stroke-width="1.5" fill="none"/></svg>
<div class="t" style="left:539.0px;top:936.8px;font-size:9px;color:#dcdcdc"><span class="j">正規化</span></div>
<div class="t" style="left:524.0px;top:953.5px;font-size:9px;color:#dcdcdc"><span class="j">ベクトル</span></div>
<div class="sk" style="left:511.0px;top:954.1px;background:#6363c7"></div>
<div class="fd" style="left:524px;top:968.5px;width:96.0px;height:13.7px"></div>
<div class="t" style="left:536.0px;top:971.0px;font-size:9px;color:#e0e0e0"><span class="j">スケール</span></div>
<div class="t" style="right:1309.0px;top:970.7px;font-size:9.5px;color:#e0e0e0">40.200</div>
<div class="sk" style="left:511.0px;top:971.6px;background:#a1a1a1"></div>
<div class="fd" style="left:524px;top:985.9px;width:96.0px;height:12.9px"></div>
<div class="t" style="left:536.0px;top:988.0px;font-size:9px;color:#e0e0e0"><span class="j">細かさ</span></div>
<div class="t" style="right:1309.0px;top:987.7px;font-size:9.5px;color:#e0e0e0">15.000</div>
<div class="sk" style="left:511.0px;top:988.6px;background:#a1a1a1"></div>
<div class="fd" style="left:524px;top:1002.5px;width:96.0px;height:13.7px"><div class="a" style="left:0;top:0;width:56.6px;height:100%;background:#4772b3"></div></div>
<div class="t" style="left:536.0px;top:1005.0px;font-size:9px;color:#e0e0e0"><span class="j">粗さ</span></div>
<div class="t" style="right:1309.0px;top:1004.7px;font-size:9.5px;color:#e0e0e0">0.605</div>
<div class="sk" style="left:511.0px;top:1005.6px;background:#a1a1a1"></div>
<div class="fd" style="left:524px;top:1018.6px;width:96.0px;height:13.7px"></div>
<div class="t" style="left:536.0px;top:1021.1px;font-size:9px;color:#e0e0e0"><span class="j">空隙性</span></div>
<div class="t" style="right:1309.0px;top:1020.8px;font-size:9.5px;color:#e0e0e0">2.000</div>
<div class="sk" style="left:511.0px;top:1021.6px;background:#a1a1a1"></div>
<div class="fd" style="left:524px;top:1035.5px;width:96.0px;height:13.7px"></div>
<div class="t" style="left:536.0px;top:1038.0px;font-size:9px;color:#e0e0e0"><span class="j">歪み</span></div>
<div class="t" style="right:1309.0px;top:1037.7px;font-size:9.5px;color:#e0e0e0">0.000</div>
<div class="sk" style="left:511.0px;top:1038.5px;background:#a1a1a1"></div>
<div class="nd" style="left:680px;top:937px;width:194px;height:175px;"><div class="nh" style="height:15px;background:#246283"></div></div>
<svg width="10" height="8" style="left:687px;top:941.5px"><path d="M1.5 1.5L5 5L8.5 1.5" stroke="#ddd" stroke-width="1.2" fill="none"/></svg>
<div class="t" style="left:700.0px;top:939.8px;font-size:9.5px;color:#e6e6e6"><span class="j">カラーランプ</span></div>
<div class="t" style="right:1053.3px;top:958.3px;font-size:9px;color:#dcdcdc"><span class="j">カラー</span></div>
<div class="sk" style="left:870.6px;top:958.9px;background:#c7c729"></div>
<div class="t" style="right:1053.3px;top:975.2px;font-size:9px;color:#dcdcdc"><span class="j">アルファ</span></div>
<div class="sk" style="left:870.6px;top:975.8px;background:#a1a1a1"></div>
<div class="t" style="left:694.0px;top:998.4px;font-size:12px;color:#dcdcdc">+</div>
<div class="t" style="left:715.0px;top:998.4px;font-size:12px;color:#dcdcdc"><span class="j">−</span></div>
<svg width="10" height="8" style="left:736px;top:1002px"><path d="M1 1.5L5 5.5L9 1.5" stroke="#ccc" stroke-width="1.2" fill="none"/></svg>
<div class="dd" style="left:762.4px;top:998.6px;width:103.8px;height:13.8px"></div>
<div class="a" style="left:813.4px;top:998.6px;width:1px;height:13.8px;background:#3a3a3a"></div>
<div class="t" style="left:768.4px;top:1000.3px;font-size:9.5px;color:#dcdcdc">RGB</div>
<div class="t" style="left:819.4px;top:1000.5px;font-size:9px;color:#dcdcdc"><span class="j">リニア</span></div>
<svg width="8" height="6" style="left:803.4px;top:1003.5px"><path d="M1 1L4 4L7 1" stroke="#ccc" stroke-width="1.1" fill="none"/></svg>
<svg width="8" height="6" style="left:856.2px;top:1003.5px"><path d="M1 1L4 4L7 1" stroke="#ccc" stroke-width="1.1" fill="none"/></svg>
<div class="a" style="left:689.2px;top:1017.9px;width:175.0px;height:14.4px;background:linear-gradient(90deg,#5a2c1e 0%,#5a2c1e 24.2%,#e06a35 62%,#e06a35 100%)"></div>
<svg width="12" height="24" style="left:726.0px;top:1016.9px"><path d="M6 0V6" stroke="#ddd" stroke-width="1" stroke-dasharray="1.5 1"/><path d="M1.5 11.5L6 6.5L10.5 11.5Z" fill="#9a9a9a" stroke="#222" stroke-width=".8"/><rect x="1.5" y="11.5" width="9" height="6.5" fill="#5a2c1e" stroke="#222" stroke-width=".8"/></svg>
<svg width="12" height="24" style="left:792.0px;top:1016.9px"><path d="M6 0V6" stroke="#222" stroke-width="1" stroke-dasharray="1.5 1"/><path d="M1.5 11.5L6 6.5L10.5 11.5Z" fill="#9a9a9a" stroke="#222" stroke-width=".8"/><rect x="1.5" y="11.5" width="9" height="6.5" fill="#e06a35" stroke="#222" stroke-width=".8"/></svg>
<div class="fd" style="left:0px;display:none"></div>
<div class="fd" style="left:687px;top:1041px;width:51.4px;height:14.4px"></div>
<div class="t" style="left:709.7px;top:1043.0px;font-size:9.5px;color:#e0e0e0">0</div>
<div class="fd" style="left:745.8px;top:1041px;width:120.4px;height:14.4px"></div>
<div class="t" style="left:754.8px;top:1043.2px;font-size:9px;color:#e0e0e0"><span class="j">位置</span></div>
<div class="t" style="right:1062.8px;top:1043.0px;font-size:9.5px;color:#e0e0e0">0.242</div>
<div class="a" style="left:687px;top:1060.8px;width:179.2px;height:14.4px;background:#5a2c1e;border-radius:3px"></div>
<div class="t" style="left:689.0px;top:1079.5px;font-size:9px;color:#dcdcdc"><span class="j">係数</span></div>
<div class="sk" style="left:675.6px;top:1080.0px;background:#a1a1a1"></div>
</div>
<!-- node editor header -->
<div class="btn" style="left:11px;top:492px;width:46px"></div>
<svg width="26" height="26" style="left:15px;top:494px" viewBox="0 0 26 26"><circle cx="12" cy="13" r="10" fill="none" stroke="#e6e6e6" stroke-width="1.6"/><path d="M7 10A5 5 0 0 1 10 6" stroke="#e6e6e6" stroke-width="2" fill="none"/><circle cx="12.5" cy="5.5" r="1" fill="#e6e6e6"/></svg>
<div class="chev" style="left:43px;top:501px"></div>
<div class="btn" style="left:65px;top:492px;width:176px"></div>
<svg width="24" height="24" style="left:72px;top:494px" viewBox="0 0 24 24"><path d="M2 7V2H7M17 2H22V7M22 17V22H17M7 22H2V17" stroke="#c8c8c8" stroke-width="1.6" fill="none"/><rect x="6.5" y="6.5" width="11" height="11" fill="#e6e6e6"/></svg>
<div class="t j hdr" style="left:104px;top:498px">オブジェクト</div>
<div class="chev" style="left:226px;top:501px"></div>
<div class="t j hdr" style="left:259px;top:498px">ビュー</div>
<div class="t j hdr" style="left:331px;top:498px">選択</div>
<div class="t j hdr" style="left:387px;top:498px">追加</div>
<div class="t j hdr" style="left:445px;top:498px">ノード</div>
<div class="a" style="left:513px;top:496px;width:20px;height:20px;background:#4772b3;border-radius:4px"></div>
<svg width="20" height="20" style="left:513px;top:496px"><path d="M4 10L8.5 14.5L16 5.5" stroke="#fff" stroke-width="2.2" fill="none"/></svg>
<div class="t j hdr" style="left:539px;top:498px">ノードを使用</div>
<div class="btn" style="left:686px;top:492px;width:115px"></div>
<div class="t hdr" style="left:698px;top:498px"><span class="j">スロット</span>1</div>
<div class="chev" style="left:785px;top:501px"></div>
<div class="btn" style="left:810px;top:492px;width:248px;overflow:hidden">
 <div class="a" style="left:45px;top:0;width:113px;height:28px;background:#1f1f1f"></div>
 <div class="a" style="left:158px;top:0;width:60px;height:28px;background:#4a4a4a"></div>
 <div class="a" style="left:188px;top:0;width:1px;height:28px;background:#3a3a3a"></div>
 <div class="a" style="left:218px;top:0;width:30px;height:28px;background:#4a4a4a"></div>
</div>
<svg width="24" height="24" style="left:815px;top:494px" viewBox="0 0 24 24"><circle cx="12" cy="12" r="10" fill="#e6e6e6"/><path d="M12 2V12H2A10 10 0 0 0 12 22V12H22A10 10 0 0 0 12 2Z" fill="#282828"/></svg>
<div class="chev" style="left:841px;top:501px"></div>
<div class="t j hdr" style="left:866px;top:498px">マテリアル</div>
<svg width="22" height="24" style="left:974px;top:494px" viewBox="0 0 22 24"><path d="M11 2L19 5V12C19 17 15 20 11 22C7 20 3 17 3 12V5Z" fill="none" stroke="#aaa" stroke-width="1.6"/></svg>
<svg width="24" height="24" style="left:1002px;top:494px" viewBox="0 0 24 24"><path d="M8 4H15L19 8V16H8Z" fill="none" stroke="#eee" stroke-width="1.6"/><path d="M5 8V20H14" stroke="#eee" stroke-width="1.6" fill="none"/></svg>
<svg width="20" height="20" style="left:1033px;top:496px"><path d="M4 4L16 16M16 4L4 16" stroke="#ddd" stroke-width="1.6"/></svg>
<svg width="24" height="24" style="left:1067px;top:494px" viewBox="0 0 24 24"><path d="M13 3L21 11L18 12L14 16L14 20L4 10L8 10L12 6Z M8 16L3 21" stroke="#aaa" stroke-width="1.5" fill="none"/></svg>
<div class="btn" style="left:1478px;top:492px;width:29px;background:#4a4a4a"></div>
<svg width="26" height="26" style="left:1479px;top:493px" viewBox="0 0 26 26"><path d="M6 12A7 7 0 1 1 18 19L14 23" stroke="#999" stroke-width="2.6" fill="none"/></svg>
<div class="btn" style="left:1514px;top:492px;width:57px;overflow:hidden"><div class="a" style="left:0;top:0;width:28px;height:28px;background:#4772b3"></div></div>
<svg width="26" height="26" style="left:1515px;top:493px" viewBox="0 0 26 26"><circle cx="15" cy="10" r="7" fill="#fff"/><circle cx="10" cy="16" r="7" fill="none" stroke="#fff" stroke-width="1.8"/></svg>
<div class="chev" style="left:1552px;top:501px"></div>
<!-- breadcrumb -->
<svg width="24" height="24" style="left:27px;top:545px" viewBox="0 0 24 24"><path d="M2 7V2H7M17 2H22V7M22 17V22H17M7 22H2V17" stroke="#c8c8c8" stroke-width="1.6" fill="none"/><rect x="6.5" y="6.5" width="11" height="11" fill="#e6e6e6"/></svg>
<div class="t j" style="left:64px;top:549px;font-size:17px;color:#e6e6e6">平面</div>
<svg width="12" height="16" style="left:118px;top:549px"><path d="M3 2L9 8L3 14" stroke="#ccc" stroke-width="1.6" fill="none"/></svg>
<svg width="24" height="24" style="left:141px;top:545px" viewBox="0 0 24 24"><path d="M4 4H20L12 20Z" fill="none" stroke="#ddd" stroke-width="1.6"/><rect x="2" y="2" width="4" height="4" fill="#1d1d1d" stroke="#ddd" stroke-width="1.3"/><rect x="18" y="2" width="4" height="4" fill="#1d1d1d" stroke="#ddd" stroke-width="1.3"/><rect x="10" y="18" width="4" height="4" fill="#1d1d1d" stroke="#ddd" stroke-width="1.3"/></svg>
<div class="t j" style="left:177px;top:549px;font-size:17px;color:#e6e6e6">平面</div>
<svg width="12" height="16" style="left:232px;top:549px"><path d="M3 2L9 8L3 14" stroke="#ccc" stroke-width="1.6" fill="none"/></svg>
<svg width="24" height="24" style="left:255px;top:545px" viewBox="0 0 24 24"><circle cx="12" cy="12" r="10" fill="#e6e6e6"/><path d="M12 2V12H2A10 10 0 0 0 12 22V12H22A10 10 0 0 0 12 2Z" fill="#1d1d1d"/></svg>
<div class="t j" style="left:291px;top:549px;font-size:17px;color:#e6e6e6">マテリアル</div>
<!-- side tabs -->
<div class="a" style="left:1px;top:556px;width:15px;height:27px;background:#3a3a3a;border-radius:0 4px 4px 0"></div>
<svg width="12" height="14" style="left:3px;top:563px"><path d="M3 2L8 7L3 12" stroke="#bbb" stroke-width="1.4" fill="none"/></svg>
<svg width="12" height="24" style="left:1567px;top:557px"><path d="M9 4L3 12L9 20" stroke="#bbb" stroke-width="1.4" fill="none"/></svg>
<!-- STATUS BAR -->
<svg width="20" height="24" style="left:13px;top:1099px" viewBox="0 0 20 24"><rect x="2" y="2" width="15" height="20" rx="6" fill="none" stroke="#bbb" stroke-width="1.5"/><path d="M3 8A6 6 0 0 1 9.5 2V10H3Z" fill="#bbb"/></svg>
<div class="t j" style="left:33px;top:1103px;font-size:17px;color:#d0d0d0">選択</div>
<svg width="20" height="24" style="left:82px;top:1099px" viewBox="0 0 20 24"><rect x="2" y="2" width="15" height="20" rx="6" fill="none" stroke="#bbb" stroke-width="1.5"/><rect x="7.5" y="4" width="4" height="8" rx="2" fill="#bbb"/></svg>
<div class="t j" style="left:101px;top:1103px;font-size:17px;color:#d0d0d0">視点の移動</div>
<svg width="20" height="24" style="left:201px;top:1099px" viewBox="0 0 20 24"><rect x="2" y="2" width="15" height="20" rx="6" fill="none" stroke="#bbb" stroke-width="1.5"/><path d="M9.5 2A6 6 0 0 1 16 8V10H9.5Z" fill="#bbb"/></svg>
<div class="t j" style="left:220px;top:1103px;font-size:17px;color:#d0d0d0">オプション</div>
<div class="t" style="left:1860px;top:1104px;font-size:16px;color:#9a9a9a">4.5.2</div>
</body></html>
